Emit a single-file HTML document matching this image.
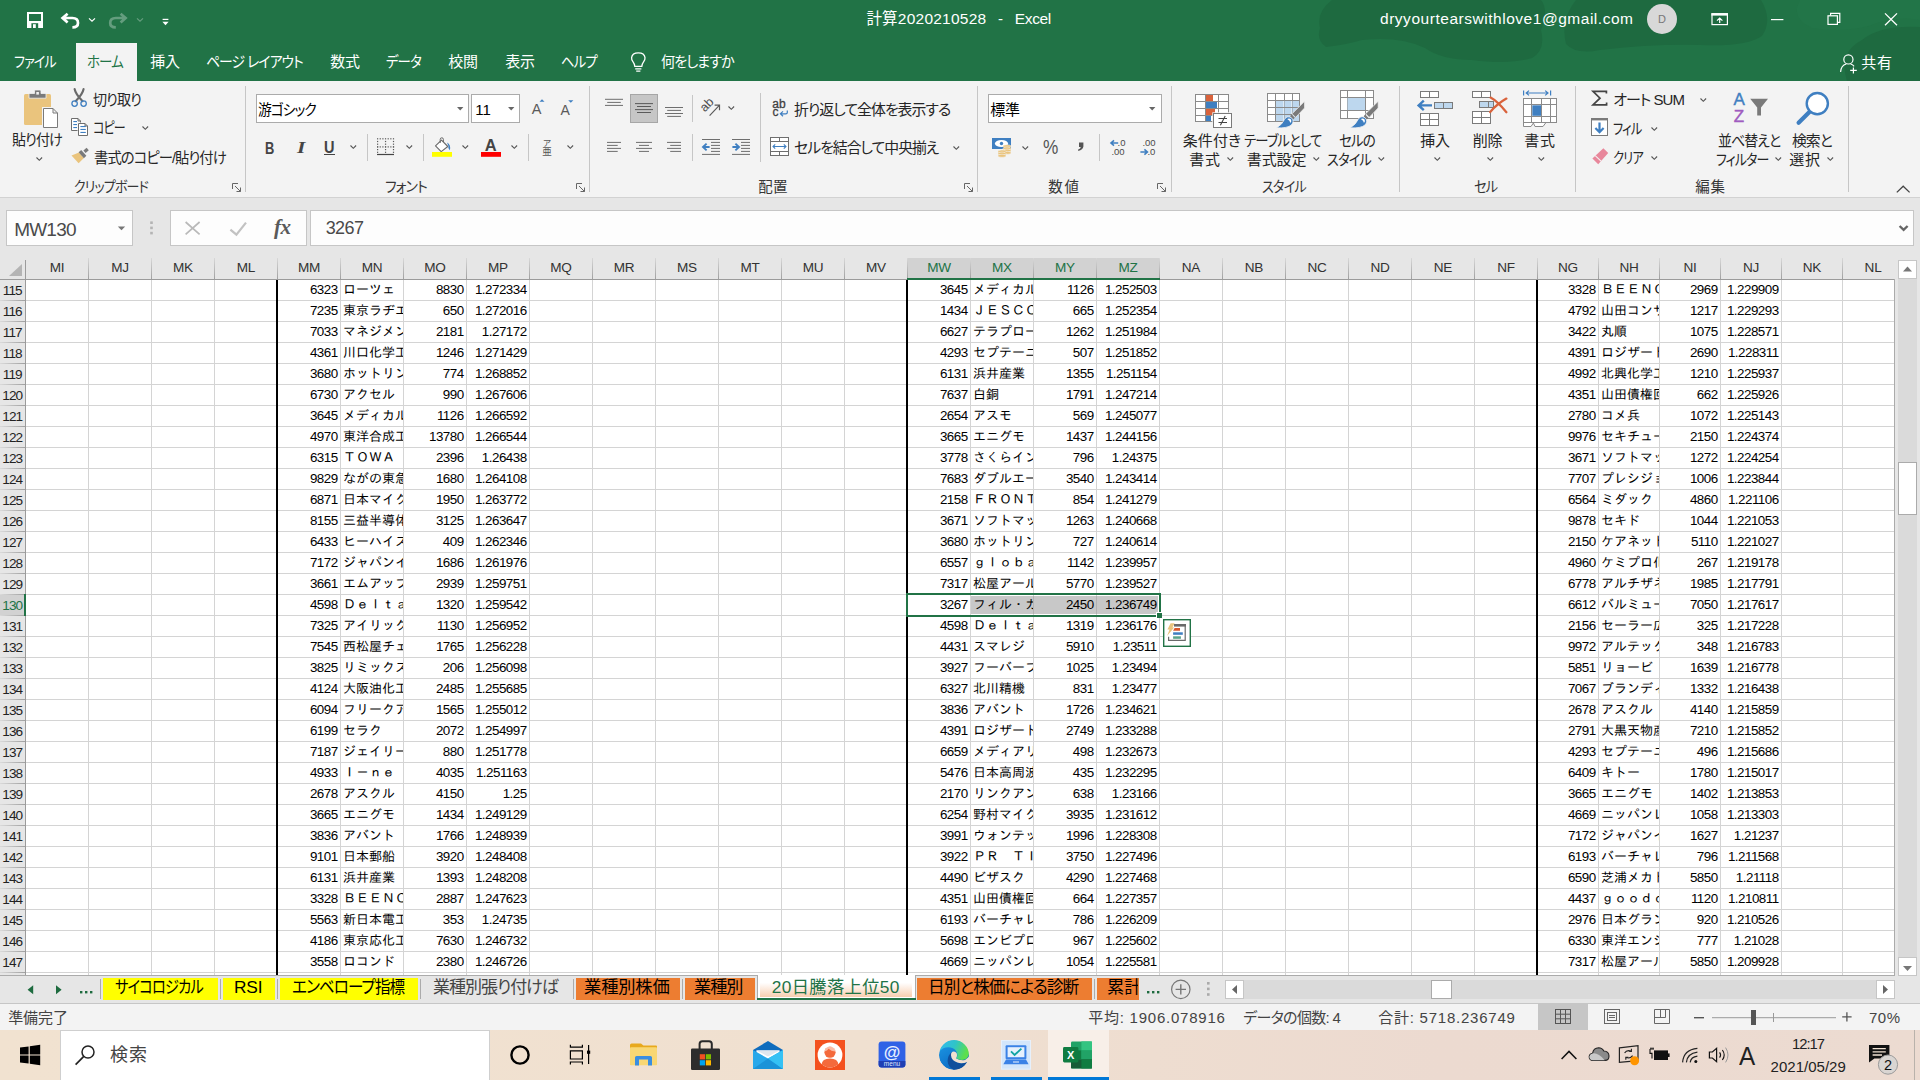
<!DOCTYPE html>
<html lang="ja"><head><meta charset="utf-8"><title>計算2020210528 - Excel</title>
<style>
*{box-sizing:border-box;margin:0;padding:0}
html,body{width:1920px;height:1080px;overflow:hidden;background:#fff}
body{position:relative;font-family:"Liberation Sans","Noto Sans CJK JP",sans-serif;font-size:15px;color:#262626;-webkit-font-smoothing:antialiased}
.abs,.abs>*{position:absolute}
.a{position:absolute}
.ui{font-family:"Liberation Sans","Noto Sans CJK JP",sans-serif;font-feature-settings:"palt" 1;white-space:nowrap}
svg{position:absolute;overflow:visible}
/* title */
#title{left:0;top:0;width:1920px;height:81px;background:#217346}
.tt{color:#fff;font-size:15.5px;line-height:20px;white-space:nowrap}
.mtab{color:#fff;font-size:15px;line-height:20px;top:52px;white-space:nowrap;letter-spacing:-0.6px}
/* ribbon */
#ribbon{left:0;top:81px;width:1920px;height:117px;background:#f3f3f3;border-bottom:1px solid #d2d2d2}
.rl{font-size:15px;line-height:20px;color:#262626;white-space:nowrap}
.gl{font-size:14.5px;line-height:20px;color:#444;white-space:nowrap;top:96px}
.vsep{width:1px;background:#c8c8c8}
/* formula */
#fbar{left:0;top:198px;width:1920px;height:60px;background:#e6e6e6}
.box{background:#fdfdfd;border:1px solid #c6c6c6}
/* grid */
#grid{left:0;top:258px;width:1920px;height:718px;background:#e6e6e6}
.ch{top:0;height:21px;line-height:20px;text-align:center;font-size:13.6px;color:#333;letter-spacing:-0.3px}
.rh{left:0;width:25px;height:21px;line-height:21px;text-align:center;font-size:13.6px;color:#222;letter-spacing:-0.85px;padding-right:0.5px}
.c{height:21px;line-height:21px;font-size:12.5px;color:#000;white-space:nowrap;overflow:hidden;font-family:"Liberation Sans","IPAGothic",sans-serif}
.n{text-align:right;padding-right:2.4px;font-size:13.4px;letter-spacing:-0.52px;line-height:20.4px}
.t{text-align:left;padding-left:2px;font-size:13px;line-height:20px}

.tx{position:absolute;white-space:nowrap;line-height:20px;height:20px;transform-origin:0 50%;font-feature-settings:"palt" 1}

#tabs{left:0;top:976px;width:1920px;height:28px;background:#e6e6e6;border-bottom:1px solid #c6c6c6}
.tb{position:absolute;top:978px;height:22px}
#status{left:0;top:1004px;width:1920px;height:26px;background:#f3f3f3}
#task{left:0;top:1030px;width:1920px;height:50px;background:linear-gradient(90deg,#f1e2d0 0%,#f0e0d0 45%,#ecdad0 75%,#ecdbd1 100%)}
</style></head>
<body>
<div id="title" class="a">
<svg style="left:0;top:0" width="1920" height="81" viewBox="0 0 1920 81"><g fill="#1e6a40"><path d="M1332 0 Q1316 12 1320 28 Q1316 40 1326 47 Q1345 45 1362 40 Q1400 36 1425 48 Q1442 60 1472 60 Q1510 65 1532 58 Q1546 50 1541 30 Q1549 10 1541 0 Z"/><path d="M1576 0 Q1560 20 1566 44 Q1576 55 1600 50 Q1650 44 1700 45 Q1746 47 1762 36 Q1773 20 1761 0 Z"/><path d="M1920 27 Q1880 25 1862 40 Q1838 52 1847 81 L1920 81 Z"/></g><path d="M1800 0 Q1790 18 1812 28 Q1850 34 1880 22 Q1905 16 1920 20 V0 Z" fill="#237749" opacity="0.6"/></svg>
<div class="a" style="left:76px;top:43px;width:61px;height:38px;background:#f3f3f3"></div>
<div class="tx" style="left:866.4px;top:9.0px;font-size:15.5px;color:#fff;letter-spacing:0.23px">計算2020210528</div>
<div class="tx" style="left:998.0px;top:9.0px;font-size:15.5px;color:#fff;letter-spacing:0.00px;transform:scaleX(0.967)">-</div>
<div class="tx" style="left:1014.8px;top:9.0px;font-size:15.5px;color:#fff;letter-spacing:-0.38px">Excel</div>
<div class="tx" style="left:1380.0px;top:9.0px;font-size:15.5px;color:#fff;letter-spacing:0.53px">dryyourtearswithlove1@gmail.com</div>
<div class="a" style="left:1647px;top:4px;width:30px;height:30px;border-radius:15px;background:#d8d8d8;color:#777;font-size:11px;line-height:30px;text-align:center">D</div>
<div class="tx" style="left:14.2px;top:52.0px;font-size:15px;color:#fff;letter-spacing:-1.00px;transform:scaleX(0.873)">ファイル</div>
<div class="tx" style="left:87.2px;top:52.0px;font-size:15px;color:#217346;letter-spacing:-1.00px;transform:scaleX(0.898)">ホーム</div>
<div class="tx" style="left:150.2px;top:52.0px;font-size:15px;color:#fff;letter-spacing:-0.27px">挿入</div>
<div class="tx" style="left:206.2px;top:52.0px;font-size:15px;color:#fff;letter-spacing:-1.00px;transform:scaleX(0.922)">ページ レイアウト</div>
<div class="tx" style="left:330.2px;top:52.0px;font-size:15px;color:#fff;letter-spacing:-0.27px">数式</div>
<div class="tx" style="left:386.2px;top:52.0px;font-size:15px;color:#fff;letter-spacing:-1.00px;transform:scaleX(0.895)">データ</div>
<div class="tx" style="left:448.2px;top:52.0px;font-size:15px;color:#fff;letter-spacing:-0.27px">校閲</div>
<div class="tx" style="left:505.2px;top:52.0px;font-size:15px;color:#fff;letter-spacing:-0.27px">表示</div>
<div class="tx" style="left:561.2px;top:52.0px;font-size:15px;color:#fff;letter-spacing:-1.00px;transform:scaleX(0.895)">ヘルプ</div>
<div class="tx" style="left:661.2px;top:52.0px;font-size:15px;color:#fff;letter-spacing:-1.00px;transform:scaleX(0.940)">何をしますか</div>
<div class="tx" style="left:1861.2px;top:53.0px;font-size:15px;color:#fff;letter-spacing:0.73px">共有</div>
<svg style="left:0;top:0" width="1920" height="81" viewBox="0 0 1920 81"><rect x="27.0" y="12.0" width="16.0" height="16.0" fill="#fff"/><rect x="29.0" y="14.0" width="12.0" height="7.0" fill="#217346"/><rect x="31.4" y="23.2" width="6.8" height="4.8" fill="#217346"/><rect x="33.0" y="24.2" width="2.8" height="3.8" fill="#fff"/><path d="M67.6 13.8 L62.6 18 L67.6 22.4 M63 18 H72.4 Q78 18 78 23 Q78 27.4 72.4 27.4" fill="none" stroke="#fff" stroke-width="2.7" stroke-linejoin="miter"/><path d="M89 18.4 L92 21.2 L95 18.4" fill="none" stroke="#fff" stroke-width="1.2"/><g opacity="0.3"><path d="M120.6 13.8 L125.6 18 L120.6 22.4 M125.2 18 H115.8 Q110.2 18 110.2 23 Q110.2 27.4 115.8 27.4" fill="none" stroke="#fff" stroke-width="2.7"/><path d="M137 18.4 L140 21.2 L143 18.4" fill="none" stroke="#fff" stroke-width="1.2"/></g><rect x="162.6" y="18.8" width="5.8" height="1.2" fill="#fff"/><polygon points="162.4,21.8 168.6,21.8 165.5,25.2" fill="#fff"/><path d="M634.8 66.4 Q634.6 63.8 632.9 61.6 Q631.4 59.6 631.6 57.6 Q632.2 52.8 638.3 52.8 Q644.4 52.8 645 57.6 Q645.2 59.6 643.7 61.6 Q642 63.8 641.8 66.4 Z M635.2 68.8 H641.4 M636.2 71.2 H640.4" fill="none" stroke="#fff" stroke-width="1.3"/><rect x="1712.0" y="13.8" width="15.4" height="10.8" fill="none" stroke="#fff" stroke-width="1.2"/><rect x="1711.4" y="13.2" width="16.6" height="2.4" fill="#fff"/><path d="M1719.7 23 V18.4 M1717 20.6 L1719.7 18 L1722.4 20.6" fill="none" stroke="#fff" stroke-width="1.2"/><rect x="1771.0" y="19.0" width="12.4" height="1.2" fill="#fff"/><path d="M1830.6 15.6 V13.4 H1839.8 V22.4 H1837.6" fill="none" stroke="#fff" stroke-width="1.2"/><rect x="1828.0" y="15.8" width="9.4" height="8.6" fill="none" stroke="#fff" stroke-width="1.2"/><path d="M1885 13.4 L1897 25.2 M1897 13.4 L1885 25.2" stroke="#fff" stroke-width="1.3"/><circle cx="1848.4" cy="59.4" r="4.6" fill="none" stroke="#fff" stroke-width="1.2"/><path d="M1840.6 72 Q1841 65.4 1846.2 64 M1850.6 64 Q1853 64.6 1854 66.4 M1853.4 67.4 V73.6 M1850.2 70.4 H1856.8" fill="none" stroke="#fff" stroke-width="1.2"/></svg>
</div>
<div id="ribbon" class="a"></div><div class="a" id="rb" style="left:0;top:0;width:1920px;height:198px">
<div class="tx" style="left:11.8px;top:130.0px;font-size:15px;color:#262626;letter-spacing:-1.00px;transform:scaleX(0.938)">貼り付け</div>
<svg style="left:36.2px;top:157.4px" width="6.6" height="3.8"><path d="M0.5 0.5 L3.3 3.3 L6.1 0.5" fill="none" stroke="#555" stroke-width="1.1"/></svg>
<div class="tx" style="left:93.2px;top:89.5px;font-size:15px;color:#262626;letter-spacing:-1.00px;transform:scaleX(0.938)">切り取り</div>
<div class="tx" style="left:93.2px;top:118.0px;font-size:15px;color:#262626;letter-spacing:-1.00px;transform:scaleX(0.799)">コピー</div>
<svg style="left:141.7px;top:126.1px" width="6.6" height="3.8"><path d="M0.5 0.5 L3.3 3.3 L6.1 0.5" fill="none" stroke="#555" stroke-width="1.1"/></svg>
<div class="tx" style="left:93.8px;top:147.5px;font-size:15px;color:#262626;letter-spacing:-1.00px;transform:scaleX(0.957)">書式のコピー/貼り付け</div>
<div class="tx" style="left:74.3px;top:176.8px;font-size:14.5px;color:#363636;letter-spacing:-1.00px;transform:scaleX(0.896)">クリップボード</div>
<svg style="left:231.7px;top:182.7px" width="10" height="10"><path d="M0.5 6 V0.5 H6" fill="none" stroke="#666" stroke-width="1"/><path d="M3 3 L8.5 8.5 M8.5 4.5 V8.5 H4.5" fill="none" stroke="#666" stroke-width="1"/></svg>
<div class="a" style="left:245px;top:86px;width:1px;height:106px;background:#c6c6c6"></div>
<div class="a box" style="left:256px;top:94px;width:213px;height:29px;background:#fff;border-color:#ababab"></div>
<div class="a box" style="left:471px;top:94px;width:49px;height:29px;background:#fff;border-color:#ababab"></div>
<div class="tx" style="left:258.2px;top:99.6px;font-size:15px;color:#000;letter-spacing:-1.00px;transform:scaleX(0.915)">游ゴシック</div>
<div class="tx" style="left:475.2px;top:99.7px;font-size:15px;color:#000;letter-spacing:0.02px">11</div>
<svg style="left:456.9px;top:107.1px" width="6.4" height="3.4"><polygon points="0,0 6.4,0 3.2,3.4" fill="#666"/></svg>
<svg style="left:507.7px;top:107.1px" width="6.4" height="3.4"><polygon points="0,0 6.4,0 3.2,3.4" fill="#666"/></svg>
<div class="tx" style="left:264.5px;top:138.2px;font-size:16.5px;color:#444;letter-spacing:0.00px;font-weight:700;transform:scaleX(0.780)">B</div>
<div class="tx" style="left:297.4px;top:138.2px;font-size:16.5px;color:#444;letter-spacing:0.00px;font-weight:700;transform:scaleX(1.306);font-style:italic;font-family:'Liberation Serif',serif">I</div>
<div class="tx" style="left:324.3px;top:137.4px;font-size:16.5px;color:#444;letter-spacing:0.00px;font-weight:700;transform:scaleX(0.881)">U</div>
<div class="a" style="left:324px;top:154px;width:11px;height:1px;background:#444"></div>
<svg style="left:349.7px;top:145.1px" width="6.6" height="3.8"><path d="M0.5 0.5 L3.3 3.3 L6.1 0.5" fill="none" stroke="#555" stroke-width="1.1"/></svg>
<div class="a" style="left:367px;top:134px;width:1px;height:27px;background:#c6c6c6"></div>
<svg style="left:405.7px;top:145.1px" width="6.6" height="3.8"><path d="M0.5 0.5 L3.3 3.3 L6.1 0.5" fill="none" stroke="#555" stroke-width="1.1"/></svg>
<div class="a" style="left:423px;top:134px;width:1px;height:27px;background:#c6c6c6"></div>
<svg style="left:461.7px;top:145.1px" width="6.6" height="3.8"><path d="M0.5 0.5 L3.3 3.3 L6.1 0.5" fill="none" stroke="#555" stroke-width="1.1"/></svg>
<svg style="left:510.7px;top:145.1px" width="6.6" height="3.8"><path d="M0.5 0.5 L3.3 3.3 L6.1 0.5" fill="none" stroke="#555" stroke-width="1.1"/></svg>
<div class="a" style="left:528px;top:134px;width:1px;height:27px;background:#c6c6c6"></div>
<svg style="left:566.7px;top:145.1px" width="6.6" height="3.8"><path d="M0.5 0.5 L3.3 3.3 L6.1 0.5" fill="none" stroke="#555" stroke-width="1.1"/></svg>
<div class="tx" style="left:385.3px;top:176.8px;font-size:14.5px;color:#363636;letter-spacing:-1.00px;transform:scaleX(0.960)">フォント</div>
<svg style="left:575.7px;top:182.7px" width="10" height="10"><path d="M0.5 6 V0.5 H6" fill="none" stroke="#666" stroke-width="1"/><path d="M3 3 L8.5 8.5 M8.5 4.5 V8.5 H4.5" fill="none" stroke="#666" stroke-width="1"/></svg>
<div class="a" style="left:589px;top:86px;width:1px;height:106px;background:#c6c6c6"></div>
<div class="a" style="left:630px;top:94px;width:28px;height:29px;background:#c6c6c6;border:1px solid #a6a6a6"></div>
<div class="a" style="left:692px;top:95px;width:1px;height:27px;background:#c6c6c6"></div>
<div class="a" style="left:692px;top:134px;width:1px;height:27px;background:#c6c6c6"></div>
<svg style="left:727.7px;top:106.1px" width="6.6" height="3.8"><path d="M0.5 0.5 L3.3 3.3 L6.1 0.5" fill="none" stroke="#555" stroke-width="1.1"/></svg>
<div class="a" style="left:760px;top:93px;width:1px;height:69px;background:#c6c6c6"></div>
<div class="tx" style="left:793.8px;top:99.5px;font-size:15px;color:#262626;letter-spacing:-1.00px;transform:scaleX(0.993)">折り返して全体を表示する</div>
<div class="tx" style="left:793.8px;top:138.0px;font-size:15px;color:#262626;letter-spacing:-1.00px;transform:scaleX(0.990)">セルを結合して中央揃え</div>
<svg style="left:952.7px;top:146.1px" width="6.6" height="3.8"><path d="M0.5 0.5 L3.3 3.3 L6.1 0.5" fill="none" stroke="#555" stroke-width="1.1"/></svg>
<div class="tx" style="left:758.3px;top:176.8px;font-size:14.5px;color:#363636;letter-spacing:0.23px">配置</div>
<svg style="left:963.7px;top:182.7px" width="10" height="10"><path d="M0.5 6 V0.5 H6" fill="none" stroke="#666" stroke-width="1"/><path d="M3 3 L8.5 8.5 M8.5 4.5 V8.5 H4.5" fill="none" stroke="#666" stroke-width="1"/></svg>
<div class="a" style="left:977px;top:86px;width:1px;height:106px;background:#c6c6c6"></div>
<div class="a box" style="left:988px;top:94px;width:174px;height:29px;background:#fff;border-color:#ababab"></div>
<div class="tx" style="left:990.2px;top:99.7px;font-size:15px;color:#000;letter-spacing:-0.27px">標準</div>
<svg style="left:1149.3px;top:107.1px" width="6.4" height="3.4"><polygon points="0,0 6.4,0 3.2,3.4" fill="#666"/></svg>
<svg style="left:1021.7px;top:146.1px" width="6.6" height="3.8"><path d="M0.5 0.5 L3.3 3.3 L6.1 0.5" fill="none" stroke="#555" stroke-width="1.1"/></svg>
<div class="tx" style="left:1043.0px;top:136.6px;font-size:20px;color:#555;letter-spacing:0.00px;transform:scaleX(0.860)">%</div>
<div class="a" style="left:1099px;top:134px;width:1px;height:27px;background:#c6c6c6"></div>
<div class="tx" style="left:1048.3px;top:176.8px;font-size:14.5px;color:#363636;letter-spacing:1.72px">数値</div>
<svg style="left:1157.2px;top:182.7px" width="10" height="10"><path d="M0.5 6 V0.5 H6" fill="none" stroke="#666" stroke-width="1"/><path d="M3 3 L8.5 8.5 M8.5 4.5 V8.5 H4.5" fill="none" stroke="#666" stroke-width="1"/></svg>
<div class="a" style="left:1171px;top:86px;width:1px;height:106px;background:#c6c6c6"></div>
<div class="tx" style="left:1182.8px;top:130.5px;font-size:15px;color:#262626;letter-spacing:0.04px">条件付き</div>
<div class="tx" style="left:1189.2px;top:150.0px;font-size:15px;color:#262626;letter-spacing:0.73px">書式</div>
<svg style="left:1226.7px;top:157.4px" width="6.6" height="3.8"><path d="M0.5 0.5 L3.3 3.3 L6.1 0.5" fill="none" stroke="#555" stroke-width="1.1"/></svg>
<div class="tx" style="left:1244.2px;top:130.5px;font-size:15px;color:#262626;letter-spacing:-1.00px;transform:scaleX(0.890)">テーブルとして</div>
<div class="tx" style="left:1246.8px;top:150.0px;font-size:15px;color:#262626;letter-spacing:-0.09px">書式設定</div>
<svg style="left:1313.2px;top:157.4px" width="6.6" height="3.8"><path d="M0.5 0.5 L3.3 3.3 L6.1 0.5" fill="none" stroke="#555" stroke-width="1.1"/></svg>
<div class="tx" style="left:1339.2px;top:130.5px;font-size:15px;color:#262626;letter-spacing:-1.00px;transform:scaleX(0.901)">セルの</div>
<div class="tx" style="left:1326.8px;top:150.0px;font-size:15px;color:#262626;letter-spacing:-1.00px;transform:scaleX(0.880)">スタイル</div>
<svg style="left:1378.2px;top:157.4px" width="6.6" height="3.8"><path d="M0.5 0.5 L3.3 3.3 L6.1 0.5" fill="none" stroke="#555" stroke-width="1.1"/></svg>
<div class="tx" style="left:1261.8px;top:176.8px;font-size:14.5px;color:#363636;letter-spacing:-1.00px;transform:scaleX(0.912)">スタイル</div>
<div class="a" style="left:1399px;top:86px;width:1px;height:106px;background:#c6c6c6"></div>
<div class="tx" style="left:1420.2px;top:130.5px;font-size:15px;color:#262626;letter-spacing:-0.27px">挿入</div>
<svg style="left:1434.2px;top:157.4px" width="6.6" height="3.8"><path d="M0.5 0.5 L3.3 3.3 L6.1 0.5" fill="none" stroke="#555" stroke-width="1.1"/></svg>
<div class="tx" style="left:1472.8px;top:130.5px;font-size:15px;color:#262626;letter-spacing:-0.27px">削除</div>
<svg style="left:1486.7px;top:157.4px" width="6.6" height="3.8"><path d="M0.5 0.5 L3.3 3.3 L6.1 0.5" fill="none" stroke="#555" stroke-width="1.1"/></svg>
<div class="tx" style="left:1524.2px;top:130.5px;font-size:15px;color:#262626;letter-spacing:0.73px">書式</div>
<svg style="left:1538.2px;top:157.4px" width="6.6" height="3.8"><path d="M0.5 0.5 L3.3 3.3 L6.1 0.5" fill="none" stroke="#555" stroke-width="1.1"/></svg>
<div class="tx" style="left:1474.3px;top:176.8px;font-size:14.5px;color:#363636;letter-spacing:-1.00px;transform:scaleX(0.918)">セル</div>
<div class="a" style="left:1575px;top:86px;width:1px;height:106px;background:#c6c6c6"></div>
<div class="tx" style="left:1613.2px;top:89.5px;font-size:15px;color:#262626;letter-spacing:-0.98px">オート SUM</div>
<svg style="left:1700.2px;top:97.6px" width="6.6" height="3.8"><path d="M0.5 0.5 L3.3 3.3 L6.1 0.5" fill="none" stroke="#555" stroke-width="1.1"/></svg>
<div class="tx" style="left:1613.2px;top:118.5px;font-size:15px;color:#262626;letter-spacing:-1.00px;transform:scaleX(0.816)">フィル</div>
<svg style="left:1650.7px;top:126.6px" width="6.6" height="3.8"><path d="M0.5 0.5 L3.3 3.3 L6.1 0.5" fill="none" stroke="#555" stroke-width="1.1"/></svg>
<div class="tx" style="left:1613.2px;top:147.5px;font-size:15px;color:#262626;letter-spacing:-1.00px;transform:scaleX(0.815)">クリア</div>
<svg style="left:1650.7px;top:155.6px" width="6.6" height="3.8"><path d="M0.5 0.5 L3.3 3.3 L6.1 0.5" fill="none" stroke="#555" stroke-width="1.1"/></svg>
<div class="tx" style="left:1718.2px;top:130.5px;font-size:15px;color:#262626;letter-spacing:-1.00px;transform:scaleX(0.929)">並べ替えと</div>
<div class="tx" style="left:1715.8px;top:150.0px;font-size:15px;color:#262626;letter-spacing:-1.00px;transform:scaleX(0.863)">フィルター</div>
<svg style="left:1775.2px;top:157.4px" width="6.6" height="3.8"><path d="M0.5 0.5 L3.3 3.3 L6.1 0.5" fill="none" stroke="#555" stroke-width="1.1"/></svg>
<div class="tx" style="left:1791.8px;top:130.5px;font-size:15px;color:#262626;letter-spacing:-1.00px;transform:scaleX(0.989)">検索と</div>
<div class="tx" style="left:1789.2px;top:150.0px;font-size:15px;color:#262626;letter-spacing:0.73px">選択</div>
<svg style="left:1826.7px;top:157.4px" width="6.6" height="3.8"><path d="M0.5 0.5 L3.3 3.3 L6.1 0.5" fill="none" stroke="#555" stroke-width="1.1"/></svg>
<div class="tx" style="left:1695.3px;top:176.8px;font-size:14.5px;color:#363636;letter-spacing:0.72px">編集</div>
<div class="a" style="left:1848px;top:86px;width:1px;height:106px;background:#c6c6c6"></div>
<svg style="left:1896px;top:185px" width="15" height="9"><path d="M0.8 7.4 L7.2 1.2 L13.6 7.4" fill="none" stroke="#444" stroke-width="1.3"/></svg>
<svg style="left:0;top:0" width="1920" height="198" viewBox="0 0 1920 198"><rect x="24" y="94" width="27" height="31" rx="1.5" fill="#eac47d"/><path d="M29 93.5 H34.5 V91 Q34.5 90 35.5 90 H40 Q41 90 41 91 V93.5 H46 V98.2 H29 Z" fill="#7a7a7a" stroke="#f3f3f3" stroke-width="0.8"/><rect x="36.3" y="92" width="2.6" height="2.6" fill="#f3f3f3"/><rect x="42" y="107" width="17" height="22" fill="#f3f3f3"/><path d="M43.5 108.5 H53.0 L57.5 113.0 V127.5 H43.5 Z M53.0 108.5 V113.0 H57.5" fill="#fff" stroke="#7a7a7a" stroke-width="1"/><path d="M74.6 89 Q75.5 94 82.6 101.2 M83.6 89 Q82.7 94 75.6 101.2" fill="none" stroke="#6a6a6a" stroke-width="2.1" stroke-linecap="round"/><circle cx="74.6" cy="103.6" r="2.7" fill="none" stroke="#3f7fc1" stroke-width="1.3"/><circle cx="83.6" cy="103.6" r="2.7" fill="none" stroke="#3f7fc1" stroke-width="1.3"/><path d="M71.5 118.5 H78.0 L80.5 121.0 V130.5 H71.5 Z M78.0 118.5 V121.0 H80.5" fill="#fff" stroke="#6e6e6e" stroke-width="1"/><rect x="73.3" y="121.0" width="3.7" height="1.1" fill="#3f7fc1"/><rect x="73.3" y="124.0" width="3.7" height="1.1" fill="#3f7fc1"/><rect x="73.3" y="127.0" width="3.7" height="1.1" fill="#3f7fc1"/><rect x="77.5" y="122.5" width="11.0" height="14.0" fill="#f3f3f3"/><path d="M78.5 123.5 H85.0 L87.5 126.0 V135.5 H78.5 Z M85.0 123.5 V126.0 H87.5" fill="#fff" stroke="#6e6e6e" stroke-width="1"/><rect x="80.4" y="126.0" width="5.4" height="1.1" fill="#3f7fc1"/><rect x="80.4" y="128.9" width="5.4" height="1.1" fill="#3f7fc1"/><rect x="80.4" y="131.9" width="5.4" height="1.1" fill="#3f7fc1"/><polygon points="71.5,155.6 79,152.6 83.9,158 78.6,163.2" fill="#eac47d"/><polygon points="78.6,152.2 81.2,150 86.4,155.8 83.9,158.2" fill="#7a7a7a"/><polygon points="83.4,150.6 86.6,147.8 88.8,150.2 85.6,153" fill="#7a7a7a"/><text x="536.6" y="113.7" font-size="14.5" text-anchor="middle" fill="#5a5a5a" font-family="Liberation Sans, sans-serif">A</text><polygon points="539.5,101.8 544.5,101.8 542,99.2" fill="#3f7fc1"/><text x="565.2" y="114.5" font-size="14" text-anchor="middle" fill="#5a5a5a" font-family="Liberation Sans, sans-serif">A</text><polygon points="568.2,100.2 573.4,100.2 570.8,102.8" fill="#3f7fc1"/><g fill="#5a5a5a"><rect x="377.00" y="138.20" width="1.2" height="1.2"/><rect x="377.00" y="146.30" width="1.2" height="1.2"/><rect x="379.65" y="138.20" width="1.2" height="1.2"/><rect x="379.65" y="146.30" width="1.2" height="1.2"/><rect x="382.30" y="138.20" width="1.2" height="1.2"/><rect x="382.30" y="146.30" width="1.2" height="1.2"/><rect x="384.95" y="138.20" width="1.2" height="1.2"/><rect x="384.95" y="146.30" width="1.2" height="1.2"/><rect x="387.60" y="138.20" width="1.2" height="1.2"/><rect x="387.60" y="146.30" width="1.2" height="1.2"/><rect x="390.25" y="138.20" width="1.2" height="1.2"/><rect x="390.25" y="146.30" width="1.2" height="1.2"/><rect x="392.90" y="138.20" width="1.2" height="1.2"/><rect x="392.90" y="146.30" width="1.2" height="1.2"/><rect x="377.00" y="140.90" width="1.2" height="1.2"/><rect x="384.95" y="140.90" width="1.2" height="1.2"/><rect x="392.90" y="140.90" width="1.2" height="1.2"/><rect x="377.00" y="143.60" width="1.2" height="1.2"/><rect x="384.95" y="143.60" width="1.2" height="1.2"/><rect x="392.90" y="143.60" width="1.2" height="1.2"/><rect x="377.00" y="146.30" width="1.2" height="1.2"/><rect x="384.95" y="146.30" width="1.2" height="1.2"/><rect x="392.90" y="146.30" width="1.2" height="1.2"/><rect x="377.00" y="149.00" width="1.2" height="1.2"/><rect x="384.95" y="149.00" width="1.2" height="1.2"/><rect x="392.90" y="149.00" width="1.2" height="1.2"/><rect x="377.00" y="151.70" width="1.2" height="1.2"/><rect x="384.95" y="151.70" width="1.2" height="1.2"/><rect x="392.90" y="151.70" width="1.2" height="1.2"/></g><rect x="377.0" y="153.9" width="17.0" height="1.2" fill="#444"/><path d="M441.5 140.2 L447.8 146.5 L441.2 151.6 L435.5 145.8 Z" fill="#fff" stroke="#6a6a6a" stroke-width="1.1" stroke-linejoin="round"/><path d="M440.2 143 V139.4 Q440.2 137.8 441.8 137.8 Q443.4 137.8 443.4 139.4 V142" fill="none" stroke="#6a6a6a" stroke-width="1"/><path d="M447 142.5 Q451.2 144.5 449.8 150.2 Q447.6 147.6 448.6 146.4 Z" fill="#3f7fc1"/><rect x="432.0" y="152.0" width="20.0" height="4.8" fill="#ffff00"/><text x="490.8" y="150.5" font-size="16.5" font-weight="700" text-anchor="middle" fill="#444" font-family="Liberation Sans, sans-serif">A</text><rect x="481.0" y="152.0" width="20.0" height="4.8" fill="#ff0000"/><text x="547" y="145.6" font-size="8.5" text-anchor="middle" fill="#555" font-family="Liberation Sans, Noto Sans CJK JP, sans-serif">ア</text><text x="547" y="155.4" font-size="9.5" text-anchor="middle" fill="#555" font-family="Liberation Sans, Noto Sans CJK JP, sans-serif">亜</text><rect x="605.0" y="98.8" width="18.0" height="1.0" fill="#6e6e6e"/><rect x="607.2" y="101.9" width="13.6" height="1.0" fill="#6e6e6e"/><rect x="605.0" y="104.9" width="18.0" height="1.0" fill="#6e6e6e"/><rect x="635.0" y="103.1" width="18.0" height="1.0" fill="#5a5a5a"/><rect x="637.0" y="106.0" width="14.0" height="1.0" fill="#5a5a5a"/><rect x="635.0" y="109.1" width="18.0" height="1.0" fill="#5a5a5a"/><rect x="637.0" y="112.0" width="14.0" height="1.0" fill="#5a5a5a"/><rect x="665.0" y="107.0" width="18.0" height="1.0" fill="#6e6e6e"/><rect x="667.2" y="109.9" width="13.8" height="1.0" fill="#6e6e6e"/><rect x="665.0" y="113.0" width="18.0" height="1.0" fill="#6e6e6e"/><rect x="667.2" y="115.9" width="13.8" height="1.0" fill="#6e6e6e"/><text transform="translate(709.6,107.6) rotate(-45)" font-size="12.5" text-anchor="middle" fill="#505050" font-family="Liberation Sans, sans-serif">ab</text><path d="M709.6 115.6 L719.3 105.4 M714.6 105.2 H719.5 V110.2" fill="none" stroke="#5a5a5a" stroke-width="1.2"/><text x="772.2" y="108" font-size="12" fill="#404040" stroke="#404040" stroke-width="0.3" font-family="Liberation Sans, sans-serif" letter-spacing="0.2">ab</text><text x="772.4" y="116.4" font-size="12" fill="#404040" stroke="#404040" stroke-width="0.3" font-family="Liberation Sans, sans-serif">c</text><path d="M787.3 110.4 V112.4 Q787.3 113.8 785.8 113.8 H780.6 M783 111.4 L780.4 113.8 L783 116.2" fill="none" stroke="#3f7fc1" stroke-width="1.2"/><rect x="607.0" y="141.9" width="14.0" height="1.0" fill="#6e6e6e"/><rect x="636.0" y="141.9" width="16.0" height="1.0" fill="#6e6e6e"/><rect x="667.0" y="141.9" width="14.0" height="1.0" fill="#6e6e6e"/><rect x="607.0" y="144.9" width="10.7" height="1.0" fill="#6e6e6e"/><rect x="639.0" y="144.9" width="10.0" height="1.0" fill="#6e6e6e"/><rect x="670.2" y="144.9" width="10.8" height="1.0" fill="#6e6e6e"/><rect x="607.0" y="147.9" width="14.0" height="1.0" fill="#6e6e6e"/><rect x="636.0" y="147.9" width="16.0" height="1.0" fill="#6e6e6e"/><rect x="667.0" y="147.9" width="14.0" height="1.0" fill="#6e6e6e"/><rect x="607.0" y="150.9" width="10.7" height="1.0" fill="#6e6e6e"/><rect x="639.0" y="150.9" width="10.0" height="1.0" fill="#6e6e6e"/><rect x="670.2" y="150.9" width="10.8" height="1.0" fill="#6e6e6e"/><rect x="702.0" y="139.0" width="18.0" height="1.0" fill="#6e6e6e"/><rect x="702.0" y="153.9" width="18.0" height="1.0" fill="#6e6e6e"/><rect x="711.0" y="141.9" width="9.0" height="1.0" fill="#6e6e6e"/><rect x="711.0" y="144.9" width="9.0" height="1.0" fill="#6e6e6e"/><rect x="711.0" y="147.9" width="9.0" height="1.0" fill="#6e6e6e"/><rect x="711.0" y="150.9" width="9.0" height="1.0" fill="#6e6e6e"/><rect x="732.0" y="139.0" width="18.0" height="1.0" fill="#6e6e6e"/><rect x="732.0" y="153.9" width="18.0" height="1.0" fill="#6e6e6e"/><rect x="741.0" y="141.9" width="9.0" height="1.0" fill="#6e6e6e"/><rect x="741.0" y="144.9" width="9.0" height="1.0" fill="#6e6e6e"/><rect x="741.0" y="147.9" width="9.0" height="1.0" fill="#6e6e6e"/><rect x="741.0" y="150.9" width="9.0" height="1.0" fill="#6e6e6e"/><path d="M709.6 147 H703.4 M706.6 143.6 L703 147 L706.6 150.4" fill="none" stroke="#3f7fc1" stroke-width="1.9"/><path d="M732.4 147 H738.6 M735.4 143.6 L739 147 L735.4 150.4" fill="none" stroke="#3f7fc1" stroke-width="1.9"/><rect x="770.5" y="137.5" width="18.0" height="18.0" fill="#fff" stroke="#6e6e6e" stroke-width="1"/><rect x="770.0" y="141.0" width="19.0" height="1.0" fill="#6e6e6e"/><rect x="770.0" y="151.0" width="19.0" height="1.0" fill="#6e6e6e"/><rect x="779.0" y="137.0" width="1.0" height="4.5" fill="#6e6e6e"/><rect x="779.0" y="151.5" width="1.0" height="4.5" fill="#6e6e6e"/><path d="M773 146.5 H786 M775.2 144.3 L773 146.5 L775.2 148.7 M783.8 144.3 L786 146.5 L783.8 148.7" fill="none" stroke="#3f7fc1" stroke-width="1.1"/><rect x="992.0" y="138.0" width="19.0" height="11.0" fill="#3f7fc1"/><ellipse cx="1001.5" cy="143.5" rx="6.6" ry="3.6" fill="#fff"/><circle cx="1001.5" cy="143.5" r="1.7" fill="#3f7fc1"/><ellipse cx="1007" cy="146.2" rx="4" ry="1.5" fill="#eac47d" stroke="#f3f3f3" stroke-width="0.5"/><ellipse cx="1007" cy="148.4" rx="4" ry="1.5" fill="#eac47d" stroke="#f3f3f3" stroke-width="0.5"/><ellipse cx="1007" cy="150.6" rx="4" ry="1.5" fill="#eac47d" stroke="#f3f3f3" stroke-width="0.5"/><ellipse cx="1007" cy="152.8" rx="4" ry="1.5" fill="#eac47d" stroke="#f3f3f3" stroke-width="0.5"/><ellipse cx="1002" cy="151.4" rx="4" ry="1.5" fill="#eac47d" stroke="#f3f3f3" stroke-width="0.5"/><ellipse cx="1002" cy="153.6" rx="4" ry="1.5" fill="#eac47d" stroke="#f3f3f3" stroke-width="0.5"/><ellipse cx="1002" cy="155.8" rx="4" ry="1.5" fill="#eac47d" stroke="#f3f3f3" stroke-width="0.5"/><path d="M1079 142.6 H1083.4 V146.6 Q1083 150 1078.2 151 V149.4 Q1080.6 148.8 1080.8 147 H1079 Z" fill="#555"/><text x="1117.6" y="146.2" font-size="9.5" fill="#4a4a4a" font-family="Liberation Sans, sans-serif">.0</text><text x="1111.4" y="155" font-size="9.5" fill="#4a4a4a" font-family="Liberation Sans, sans-serif">.00</text><path d="M1118.2 143 H1111.4 M1114 140.4 L1111 143 L1114 145.6" fill="none" stroke="#3f7fc1" stroke-width="1.6"/><text x="1142.4" y="146.2" font-size="9.5" fill="#4a4a4a" font-family="Liberation Sans, sans-serif">.00</text><text x="1147.4" y="155" font-size="9.5" fill="#4a4a4a" font-family="Liberation Sans, sans-serif">.0</text><path d="M1140.4 152 H1147 M1144.4 149.4 L1147.4 152 L1144.4 154.6" fill="none" stroke="#3f7fc1" stroke-width="1.6"/><rect x="1195.5" y="94.5" width="33.0" height="27.0" fill="#fff" stroke="#8a8a8a" stroke-width="1"/><rect x="1205.0" y="94.0" width="1.0" height="28.0" fill="#8a8a8a"/><rect x="1218.0" y="94.0" width="1.0" height="28.0" fill="#8a8a8a"/><rect x="1195.0" y="101.0" width="34.0" height="1.0" fill="#8a8a8a"/><rect x="1195.0" y="108.0" width="34.0" height="1.0" fill="#8a8a8a"/><rect x="1195.0" y="115.0" width="34.0" height="1.0" fill="#8a8a8a"/><rect x="1206.0" y="95.0" width="7.0" height="6.0" fill="#d9623b"/><rect x="1206.0" y="102.0" width="11.0" height="6.0" fill="#3f7fc1"/><rect x="1206.0" y="109.0" width="9.0" height="6.0" fill="#d9623b"/><rect x="1206.0" y="116.0" width="5.0" height="5.0" fill="#3f7fc1"/><rect x="1212.3" y="112.3" width="20.2" height="15.7" fill="#f3f3f3"/><rect x="1213.5" y="113.5" width="18.0" height="14.0" fill="#fff" stroke="#7a7a7a" stroke-width="1"/><path d="M1218.5 118.5 H1227 M1218.5 122.5 H1227 M1220.4 125.2 L1225.2 116" fill="none" stroke="#444" stroke-width="1.1"/><rect x="1267.5" y="93.5" width="32.0" height="28.0" fill="#fff" stroke="#8a8a8a" stroke-width="1"/><rect x="1275.0" y="93.0" width="1.0" height="29.0" fill="#8a8a8a"/><rect x="1284.0" y="93.0" width="1.0" height="29.0" fill="#8a8a8a"/><rect x="1292.0" y="93.0" width="1.0" height="29.0" fill="#8a8a8a"/><rect x="1267.0" y="100.0" width="33.0" height="1.0" fill="#8a8a8a"/><rect x="1267.0" y="107.0" width="33.0" height="1.0" fill="#8a8a8a"/><rect x="1267.0" y="114.0" width="33.0" height="1.0" fill="#8a8a8a"/><rect x="1276.0" y="101.0" width="7.5" height="6.0" fill="#bdd7ee"/><rect x="1276.0" y="108.0" width="7.5" height="6.0" fill="#bdd7ee"/><rect x="1276.0" y="115.0" width="7.5" height="6.0" fill="#bdd7ee"/><rect x="1284.5" y="101.0" width="7.0" height="6.0" fill="#bdd7ee"/><rect x="1284.5" y="108.0" width="7.0" height="6.0" fill="#bdd7ee"/><rect x="1284.5" y="115.0" width="7.0" height="6.0" fill="#bdd7ee"/><rect x="1292.5" y="101.0" width="6.5" height="6.0" fill="#bdd7ee"/><rect x="1292.5" y="108.0" width="6.5" height="6.0" fill="#bdd7ee"/><rect x="1292.5" y="115.0" width="6.5" height="6.0" fill="#bdd7ee"/><g transform="translate(0,0)"><path d="M1304.6 101.2 L1304.6 108 L1295.6 117.4 L1292 113.8 Z" fill="#7a7a7a" stroke="#f3f3f3" stroke-width="0.8"/><path d="M1291.6 114.6 L1294.8 117.8 L1293.2 119.4 L1290 116.2 Z" fill="#7a7a7a"/><path d="M1276.6 127.8 Q1282.4 124.4 1284.4 119.6 Q1286.8 115.2 1291.2 117.6 Q1295 121 1291.4 125 Q1287.4 128.4 1276.6 127.8 Z" fill="#3f7fc1" stroke="#f3f3f3" stroke-width="0.8"/><path d="M1287.2 119 Q1289.4 117.6 1291 119.6 Q1292 121.2 1290.4 123 Q1290 120.4 1287.2 119 Z" fill="#fff"/></g><rect x="1340.5" y="90.5" width="33.0" height="28.0" fill="#fff" stroke="#8a8a8a" stroke-width="1"/><rect x="1347.0" y="90.0" width="1.0" height="29.0" fill="#8a8a8a"/><rect x="1365.0" y="90.0" width="1.0" height="29.0" fill="#8a8a8a"/><rect x="1340.0" y="97.0" width="34.0" height="1.0" fill="#8a8a8a"/><rect x="1340.0" y="110.0" width="34.0" height="1.0" fill="#8a8a8a"/><rect x="1347.5" y="98.0" width="17.5" height="12.0" fill="#bdd7ee"/><g transform="translate(73.6,0)"><path d="M1304.6 101.2 L1304.6 108 L1295.6 117.4 L1292 113.8 Z" fill="#7a7a7a" stroke="#f3f3f3" stroke-width="0.8"/><path d="M1291.6 114.6 L1294.8 117.8 L1293.2 119.4 L1290 116.2 Z" fill="#7a7a7a"/><path d="M1276.6 127.8 Q1282.4 124.4 1284.4 119.6 Q1286.8 115.2 1291.2 117.6 Q1295 121 1291.4 125 Q1287.4 128.4 1276.6 127.8 Z" fill="#3f7fc1" stroke="#f3f3f3" stroke-width="0.8"/><path d="M1287.2 119 Q1289.4 117.6 1291 119.6 Q1292 121.2 1290.4 123 Q1290 120.4 1287.2 119 Z" fill="#fff"/></g><rect x="1420.5" y="91.5" width="18.0" height="6.0" fill="#fff" stroke="#7a7a7a" stroke-width="1"/><rect x="1429.0" y="91.5" width="1.0" height="6.0" fill="#7a7a7a"/><rect x="1434.5" y="102.5" width="18.0" height="6.0" fill="#bdd7ee" stroke="#7a7a7a" stroke-width="1"/><rect x="1443.0" y="102.5" width="1.0" height="6.0" fill="#7a7a7a"/><rect x="1420.5" y="113.5" width="18.0" height="12.0" fill="#fff" stroke="#7a7a7a" stroke-width="1"/><rect x="1429.0" y="113.5" width="1.0" height="12.0" fill="#7a7a7a"/><rect x="1420.5" y="119.0" width="18.0" height="1.0" fill="#7a7a7a"/><path d="M1432 105.4 H1419.4 M1423.8 100.6 L1418.6 105.4 L1423.8 110.2" fill="none" stroke="#3f7fc1" stroke-width="2.4"/><rect x="1472.5" y="91.5" width="18.0" height="6.0" fill="#fff" stroke="#7a7a7a" stroke-width="1"/><rect x="1481.0" y="91.5" width="1.0" height="6.0" fill="#7a7a7a"/><rect x="1479.5" y="101.5" width="14.0" height="6.0" fill="#bdd7ee" stroke="#7a7a7a" stroke-width="1"/><rect x="1488.0" y="101.5" width="1.0" height="6.0" fill="#7a7a7a"/><rect x="1472.5" y="111.5" width="18.0" height="12.0" fill="#fff" stroke="#7a7a7a" stroke-width="1"/><rect x="1481.0" y="111.5" width="1.0" height="12.0" fill="#7a7a7a"/><rect x="1472.5" y="117.0" width="18.0" height="1.0" fill="#7a7a7a"/><path d="M1490.6 97.6 Q1497 101 1506.4 112.2 M1506.4 98.6 Q1497 104 1490.2 112" fill="none" stroke="#d9623b" stroke-width="2.3" stroke-linecap="round"/><path d="M1523.6 90.4 V95.6 M1550.6 90.4 V95.6 M1526.4 93 H1547.8 M1529 90.6 L1526.2 93 L1529 95.4 M1545.2 90.6 L1548 93 L1545.2 95.4" fill="none" stroke="#3f7fc1" stroke-width="1.2"/><path d="M1523.5 122 V126.5 H1531 L1533.4 123 L1535 126.5 H1543 L1546 122.5" fill="#fff" stroke="#8a8a8a" stroke-width="1"/><rect x="1523.5" y="98.5" width="33.0" height="24.0" fill="#fff" stroke="#8a8a8a" stroke-width="1"/><rect x="1531.0" y="98.0" width="1.0" height="25.0" fill="#8a8a8a"/><rect x="1541.0" y="98.0" width="1.0" height="25.0" fill="#8a8a8a"/><rect x="1550.0" y="98.0" width="1.0" height="25.0" fill="#8a8a8a"/><rect x="1523.0" y="104.0" width="34.0" height="1.0" fill="#8a8a8a"/><rect x="1523.0" y="116.0" width="34.0" height="1.0" fill="#8a8a8a"/><rect x="1532.3" y="105.3" width="8.7" height="10.5" fill="#3f7fc1"/><path d="M1606.4 93.4 V91.3 H1593 L1600 98.2 L1593 104.8 H1606.6 V102.6" fill="none" stroke="#444" stroke-width="1.7" stroke-linejoin="miter"/><rect x="1591.5" y="118.5" width="16.0" height="17.0" fill="#fff" stroke="#7a7a7a" stroke-width="1"/><rect x="1591.0" y="118.0" width="17.0" height="2.4" fill="#7a7a7a"/><path d="M1599.5 122.4 V132.4 M1595.4 128 L1599.5 132.2 L1603.6 128" fill="none" stroke="#3f7fc1" stroke-width="2.2"/><path d="M1603.4 148.2 L1608.2 153 L1598.2 164.2 L1592.4 158.6 Z" fill="#e8879b"/><path d="M1595.2 155.6 L1601 161.2" stroke="#f3f3f3" stroke-width="1.1"/><text x="1733.4" y="105" font-size="17" fill="#3f7fc1" stroke="#3f7fc1" stroke-width="0.4" font-family="Liberation Sans, sans-serif">A</text><text x="1733.8" y="122.4" font-size="17" fill="#a05cc0" stroke="#a05cc0" stroke-width="0.4" font-family="Liberation Sans, sans-serif">Z</text><path d="M1750.2 98.8 H1768 L1761 107.4 V115.4 H1757.2 V107.4 Z" fill="#7a7a7a"/><path d="M1809.4 112 L1798.6 122.8" stroke="#3f7fc1" stroke-width="4.2" stroke-linecap="round"/><circle cx="1817.3" cy="103.6" r="10.6" fill="#fff" stroke="#3f7fc1" stroke-width="2.4"/></svg>
</div>
<div id="fbar" class="a">
<div class="a box" style="left:6px;top:12px;width:127px;height:36px"></div>
<div class="a box" style="left:170px;top:12px;width:137px;height:36px"></div>
<div class="a box" style="left:310px;top:12px;width:1604px;height:36px"></div>
</div>
<div class="tx" style="left:14.2px;top:220.4px;font-size:19px;color:#4a4a4a;letter-spacing:-0.79px;font-family:'Liberation Sans',sans-serif">MW130</div>
<div class="tx" style="left:325.7px;top:217.8px;font-size:18px;color:#4a4a4a;letter-spacing:-0.58px;font-family:'Liberation Sans',sans-serif">3267</div>
<svg style="left:0;top:198px" width="1920" height="60" viewBox="0 198 1920 60"><polygon points="117.8,226.4 125.2,226.4 121.5,230.2" fill="#777"/><rect x="150.2" y="221.4" width="2.6" height="2.6" fill="#b4b4b4"/><rect x="150.2" y="226.6" width="2.6" height="2.6" fill="#b4b4b4"/><rect x="150.2" y="231.8" width="2.6" height="2.6" fill="#b4b4b4"/><path d="M185.6 222 L199.6 234.4 M199.6 222 L185.6 234.4" stroke="#b9b9b9" stroke-width="1.7" fill="none"/><path d="M230.4 229.6 L236.4 234.6 L246 222.6" stroke="#c2c2c2" stroke-width="2.2" fill="none"/><text x="274" y="234" font-size="21" font-style="italic" font-weight="700" fill="#5a5a5a" font-family="Liberation Serif, serif" letter-spacing="-0.5">fx</text><path d="M1899.6 226 L1903.6 229.8 L1907.6 226" stroke="#666" stroke-width="2.4" fill="none"/></svg>
<div id="grid" class="a">
<div class="a" style="left:26px;top:22px;width:1868px;height:695px;background:#fff"></div>
<div class="a" style="left:907px;top:0;width:253px;height:20px;background:#d2d2d2"></div>
<div class="a" style="left:0;top:337px;width:25px;height:21px;background:#d2d2d2"></div>
<div class="a" style="left:971px;top:338px;width:187px;height:18px;background:#c8c8c8"></div>
<svg class="a" style="left:0;top:0" width="1920" height="718" shape-rendering="crispEdges"><defs><linearGradient id="hg" x1="0" y1="0" x2="0" y2="1"><stop offset="0" stop-color="#d8d8d8"/><stop offset="1" stop-color="#a0a0a0"/></linearGradient><linearGradient id="vg" x1="0" y1="0" x2="1" y2="0"><stop offset="0" stop-color="#dadada"/><stop offset="1" stop-color="#a0a0a0"/></linearGradient></defs><rect x="88" y="22" width="1" height="695" fill="#d4d4d4"/><rect x="151" y="22" width="1" height="695" fill="#d4d4d4"/><rect x="214" y="22" width="1" height="695" fill="#d4d4d4"/><rect x="277" y="22" width="1" height="695" fill="#d4d4d4"/><rect x="340" y="22" width="1" height="695" fill="#d4d4d4"/><rect x="403" y="22" width="1" height="695" fill="#d4d4d4"/><rect x="466" y="22" width="1" height="695" fill="#d4d4d4"/><rect x="529" y="22" width="1" height="695" fill="#d4d4d4"/><rect x="592" y="22" width="1" height="695" fill="#d4d4d4"/><rect x="655" y="22" width="1" height="695" fill="#d4d4d4"/><rect x="718" y="22" width="1" height="695" fill="#d4d4d4"/><rect x="781" y="22" width="1" height="695" fill="#d4d4d4"/><rect x="844" y="22" width="1" height="695" fill="#d4d4d4"/><rect x="907" y="22" width="1" height="695" fill="#d4d4d4"/><rect x="970" y="22" width="1" height="695" fill="#d4d4d4"/><rect x="1033" y="22" width="1" height="695" fill="#d4d4d4"/><rect x="1096" y="22" width="1" height="695" fill="#d4d4d4"/><rect x="1159" y="22" width="1" height="695" fill="#d4d4d4"/><rect x="1222" y="22" width="1" height="695" fill="#d4d4d4"/><rect x="1285" y="22" width="1" height="695" fill="#d4d4d4"/><rect x="1348" y="22" width="1" height="695" fill="#d4d4d4"/><rect x="1411" y="22" width="1" height="695" fill="#d4d4d4"/><rect x="1474" y="22" width="1" height="695" fill="#d4d4d4"/><rect x="1537" y="22" width="1" height="695" fill="#d4d4d4"/><rect x="1598" y="22" width="1" height="695" fill="#d4d4d4"/><rect x="1659" y="22" width="1" height="695" fill="#d4d4d4"/><rect x="1720" y="22" width="1" height="695" fill="#d4d4d4"/><rect x="1781" y="22" width="1" height="695" fill="#d4d4d4"/><rect x="1842" y="22" width="1" height="695" fill="#d4d4d4"/><rect x="26" y="42" width="1868" height="1" fill="#d4d4d4"/><rect x="26" y="63" width="1868" height="1" fill="#d4d4d4"/><rect x="26" y="84" width="1868" height="1" fill="#d4d4d4"/><rect x="26" y="105" width="1868" height="1" fill="#d4d4d4"/><rect x="26" y="126" width="1868" height="1" fill="#d4d4d4"/><rect x="26" y="147" width="1868" height="1" fill="#d4d4d4"/><rect x="26" y="168" width="1868" height="1" fill="#d4d4d4"/><rect x="26" y="189" width="1868" height="1" fill="#d4d4d4"/><rect x="26" y="210" width="1868" height="1" fill="#d4d4d4"/><rect x="26" y="231" width="1868" height="1" fill="#d4d4d4"/><rect x="26" y="252" width="1868" height="1" fill="#d4d4d4"/><rect x="26" y="273" width="1868" height="1" fill="#d4d4d4"/><rect x="26" y="294" width="1868" height="1" fill="#d4d4d4"/><rect x="26" y="315" width="1868" height="1" fill="#d4d4d4"/><rect x="26" y="336" width="1868" height="1" fill="#d4d4d4"/><rect x="26" y="357" width="1868" height="1" fill="#d4d4d4"/><rect x="26" y="378" width="1868" height="1" fill="#d4d4d4"/><rect x="26" y="399" width="1868" height="1" fill="#d4d4d4"/><rect x="26" y="420" width="1868" height="1" fill="#d4d4d4"/><rect x="26" y="441" width="1868" height="1" fill="#d4d4d4"/><rect x="26" y="462" width="1868" height="1" fill="#d4d4d4"/><rect x="26" y="483" width="1868" height="1" fill="#d4d4d4"/><rect x="26" y="504" width="1868" height="1" fill="#d4d4d4"/><rect x="26" y="525" width="1868" height="1" fill="#d4d4d4"/><rect x="26" y="546" width="1868" height="1" fill="#d4d4d4"/><rect x="26" y="567" width="1868" height="1" fill="#d4d4d4"/><rect x="26" y="588" width="1868" height="1" fill="#d4d4d4"/><rect x="26" y="609" width="1868" height="1" fill="#d4d4d4"/><rect x="26" y="630" width="1868" height="1" fill="#d4d4d4"/><rect x="26" y="651" width="1868" height="1" fill="#d4d4d4"/><rect x="26" y="672" width="1868" height="1" fill="#d4d4d4"/><rect x="26" y="693" width="1868" height="1" fill="#d4d4d4"/><rect x="26" y="714" width="1868" height="1" fill="#d4d4d4"/><rect x="88" y="0" width="1" height="21" fill="url(#hg)"/><rect x="151" y="0" width="1" height="21" fill="url(#hg)"/><rect x="214" y="0" width="1" height="21" fill="url(#hg)"/><rect x="277" y="0" width="1" height="21" fill="url(#hg)"/><rect x="340" y="0" width="1" height="21" fill="url(#hg)"/><rect x="403" y="0" width="1" height="21" fill="url(#hg)"/><rect x="466" y="0" width="1" height="21" fill="url(#hg)"/><rect x="529" y="0" width="1" height="21" fill="url(#hg)"/><rect x="592" y="0" width="1" height="21" fill="url(#hg)"/><rect x="655" y="0" width="1" height="21" fill="url(#hg)"/><rect x="718" y="0" width="1" height="21" fill="url(#hg)"/><rect x="781" y="0" width="1" height="21" fill="url(#hg)"/><rect x="844" y="0" width="1" height="21" fill="url(#hg)"/><rect x="907" y="0" width="1" height="21" fill="url(#hg)"/><rect x="970" y="0" width="1" height="21" fill="url(#hg)"/><rect x="1033" y="0" width="1" height="21" fill="url(#hg)"/><rect x="1096" y="0" width="1" height="21" fill="url(#hg)"/><rect x="1159" y="0" width="1" height="21" fill="url(#hg)"/><rect x="1222" y="0" width="1" height="21" fill="url(#hg)"/><rect x="1285" y="0" width="1" height="21" fill="url(#hg)"/><rect x="1348" y="0" width="1" height="21" fill="url(#hg)"/><rect x="1411" y="0" width="1" height="21" fill="url(#hg)"/><rect x="1474" y="0" width="1" height="21" fill="url(#hg)"/><rect x="1537" y="0" width="1" height="21" fill="url(#hg)"/><rect x="1598" y="0" width="1" height="21" fill="url(#hg)"/><rect x="1659" y="0" width="1" height="21" fill="url(#hg)"/><rect x="1720" y="0" width="1" height="21" fill="url(#hg)"/><rect x="1781" y="0" width="1" height="21" fill="url(#hg)"/><rect x="1842" y="0" width="1" height="21" fill="url(#hg)"/><rect x="0" y="42" width="25" height="1" fill="url(#vg)"/><rect x="0" y="63" width="25" height="1" fill="url(#vg)"/><rect x="0" y="84" width="25" height="1" fill="url(#vg)"/><rect x="0" y="105" width="25" height="1" fill="url(#vg)"/><rect x="0" y="126" width="25" height="1" fill="url(#vg)"/><rect x="0" y="147" width="25" height="1" fill="url(#vg)"/><rect x="0" y="168" width="25" height="1" fill="url(#vg)"/><rect x="0" y="189" width="25" height="1" fill="url(#vg)"/><rect x="0" y="210" width="25" height="1" fill="url(#vg)"/><rect x="0" y="231" width="25" height="1" fill="url(#vg)"/><rect x="0" y="252" width="25" height="1" fill="url(#vg)"/><rect x="0" y="273" width="25" height="1" fill="url(#vg)"/><rect x="0" y="294" width="25" height="1" fill="url(#vg)"/><rect x="0" y="315" width="25" height="1" fill="url(#vg)"/><rect x="0" y="336" width="25" height="1" fill="url(#vg)"/><rect x="0" y="357" width="25" height="1" fill="url(#vg)"/><rect x="0" y="378" width="25" height="1" fill="url(#vg)"/><rect x="0" y="399" width="25" height="1" fill="url(#vg)"/><rect x="0" y="420" width="25" height="1" fill="url(#vg)"/><rect x="0" y="441" width="25" height="1" fill="url(#vg)"/><rect x="0" y="462" width="25" height="1" fill="url(#vg)"/><rect x="0" y="483" width="25" height="1" fill="url(#vg)"/><rect x="0" y="504" width="25" height="1" fill="url(#vg)"/><rect x="0" y="525" width="25" height="1" fill="url(#vg)"/><rect x="0" y="546" width="25" height="1" fill="url(#vg)"/><rect x="0" y="567" width="25" height="1" fill="url(#vg)"/><rect x="0" y="588" width="25" height="1" fill="url(#vg)"/><rect x="0" y="609" width="25" height="1" fill="url(#vg)"/><rect x="0" y="630" width="25" height="1" fill="url(#vg)"/><rect x="0" y="651" width="25" height="1" fill="url(#vg)"/><rect x="0" y="672" width="25" height="1" fill="url(#vg)"/><rect x="0" y="693" width="25" height="1" fill="url(#vg)"/><rect x="0" y="714" width="25" height="1" fill="url(#vg)"/><rect x="25" y="2" width="1" height="716" fill="#9b9b9b"/><rect x="0" y="21" width="1895" height="1" fill="#9b9b9b"/><rect x="1894" y="21" width="1" height="697" fill="#ababab"/><rect x="0" y="717" width="1895" height="1" fill="#ababab"/><polygon points="22,6 22,18 9,18" fill="#b4b4b4" shape-rendering="auto"/><rect x="276" y="22" width="2" height="695" fill="#000"/><rect x="906" y="22" width="2" height="695" fill="#000"/><rect x="1536" y="22" width="2" height="695" fill="#000"/><rect x="907" y="20" width="253" height="2" fill="#217346"/><rect x="24" y="336" width="2" height="22" fill="#217346"/><rect x="1033" y="338" width="1" height="18" fill="#b2b2b2"/><rect x="1096" y="338" width="1" height="18" fill="#b2b2b2"/><rect x="906" y="335" width="255" height="2" fill="#217346"/><rect x="906" y="335" width="2" height="24" fill="#217346"/><rect x="906" y="357" width="250" height="2" fill="#217346"/><rect x="1159" y="335" width="2" height="19" fill="#217346"/><rect x="1156" y="354" width="6" height="6" fill="#fff"/><rect x="1157" y="355" width="5" height="5" fill="#217346"/></svg>
<div class="a ch" style="left:26px;width:62px">MI</div>
<div class="a ch" style="left:89px;width:62px">MJ</div>
<div class="a ch" style="left:152px;width:62px">MK</div>
<div class="a ch" style="left:215px;width:62px">ML</div>
<div class="a ch" style="left:278px;width:62px">MM</div>
<div class="a ch" style="left:341px;width:62px">MN</div>
<div class="a ch" style="left:404px;width:62px">MO</div>
<div class="a ch" style="left:467px;width:62px">MP</div>
<div class="a ch" style="left:530px;width:62px">MQ</div>
<div class="a ch" style="left:593px;width:62px">MR</div>
<div class="a ch" style="left:656px;width:62px">MS</div>
<div class="a ch" style="left:719px;width:62px">MT</div>
<div class="a ch" style="left:782px;width:62px">MU</div>
<div class="a ch" style="left:845px;width:62px">MV</div>
<div class="a ch" style="left:908px;width:62px;color:#217346">MW</div>
<div class="a ch" style="left:971px;width:62px;color:#217346">MX</div>
<div class="a ch" style="left:1034px;width:62px;color:#217346">MY</div>
<div class="a ch" style="left:1097px;width:62px;color:#217346">MZ</div>
<div class="a ch" style="left:1160px;width:62px">NA</div>
<div class="a ch" style="left:1223px;width:62px">NB</div>
<div class="a ch" style="left:1286px;width:62px">NC</div>
<div class="a ch" style="left:1349px;width:62px">ND</div>
<div class="a ch" style="left:1412px;width:62px">NE</div>
<div class="a ch" style="left:1475px;width:62px">NF</div>
<div class="a ch" style="left:1538px;width:60px">NG</div>
<div class="a ch" style="left:1599px;width:60px">NH</div>
<div class="a ch" style="left:1660px;width:60px">NI</div>
<div class="a ch" style="left:1721px;width:60px">NJ</div>
<div class="a ch" style="left:1782px;width:60px">NK</div>
<div class="a ch" style="left:1843px;width:60px">NL</div>
<div class="a rh" style="top:22px">115</div>
<div class="a rh" style="top:43px">116</div>
<div class="a rh" style="top:64px">117</div>
<div class="a rh" style="top:85px">118</div>
<div class="a rh" style="top:106px">119</div>
<div class="a rh" style="top:127px">120</div>
<div class="a rh" style="top:148px">121</div>
<div class="a rh" style="top:169px">122</div>
<div class="a rh" style="top:190px">123</div>
<div class="a rh" style="top:211px">124</div>
<div class="a rh" style="top:232px">125</div>
<div class="a rh" style="top:253px">126</div>
<div class="a rh" style="top:274px">127</div>
<div class="a rh" style="top:295px">128</div>
<div class="a rh" style="top:316px">129</div>
<div class="a rh" style="top:337px;color:#217346">130</div>
<div class="a rh" style="top:358px">131</div>
<div class="a rh" style="top:379px">132</div>
<div class="a rh" style="top:400px">133</div>
<div class="a rh" style="top:421px">134</div>
<div class="a rh" style="top:442px">135</div>
<div class="a rh" style="top:463px">136</div>
<div class="a rh" style="top:484px">137</div>
<div class="a rh" style="top:505px">138</div>
<div class="a rh" style="top:526px">139</div>
<div class="a rh" style="top:547px">140</div>
<div class="a rh" style="top:568px">141</div>
<div class="a rh" style="top:589px">142</div>
<div class="a rh" style="top:610px">143</div>
<div class="a rh" style="top:631px">144</div>
<div class="a rh" style="top:652px">145</div>
<div class="a rh" style="top:673px">146</div>
<div class="a rh" style="top:694px">147</div>
<div class="a c n" style="left:278px;top:22px;width:62px">6323</div>
<div class="a c t" style="left:341px;top:22px;width:62px">ローツェ</div>
<div class="a c n" style="left:404px;top:22px;width:62px">8830</div>
<div class="a c n" style="left:467px;top:22px;width:62px">1.272334</div>
<div class="a c n" style="left:278px;top:43px;width:62px">7235</div>
<div class="a c t" style="left:341px;top:43px;width:62px">東京ラヂエ</div>
<div class="a c n" style="left:404px;top:43px;width:62px">650</div>
<div class="a c n" style="left:467px;top:43px;width:62px">1.272016</div>
<div class="a c n" style="left:278px;top:64px;width:62px">7033</div>
<div class="a c t" style="left:341px;top:64px;width:62px">マネジメン</div>
<div class="a c n" style="left:404px;top:64px;width:62px">2181</div>
<div class="a c n" style="left:467px;top:64px;width:62px">1.27172</div>
<div class="a c n" style="left:278px;top:85px;width:62px">4361</div>
<div class="a c t" style="left:341px;top:85px;width:62px">川口化学工</div>
<div class="a c n" style="left:404px;top:85px;width:62px">1246</div>
<div class="a c n" style="left:467px;top:85px;width:62px">1.271429</div>
<div class="a c n" style="left:278px;top:106px;width:62px">3680</div>
<div class="a c t" style="left:341px;top:106px;width:62px">ホットリン</div>
<div class="a c n" style="left:404px;top:106px;width:62px">774</div>
<div class="a c n" style="left:467px;top:106px;width:62px">1.268852</div>
<div class="a c n" style="left:278px;top:127px;width:62px">6730</div>
<div class="a c t" style="left:341px;top:127px;width:62px">アクセル</div>
<div class="a c n" style="left:404px;top:127px;width:62px">990</div>
<div class="a c n" style="left:467px;top:127px;width:62px">1.267606</div>
<div class="a c n" style="left:278px;top:148px;width:62px">3645</div>
<div class="a c t" style="left:341px;top:148px;width:62px">メディカル</div>
<div class="a c n" style="left:404px;top:148px;width:62px">1126</div>
<div class="a c n" style="left:467px;top:148px;width:62px">1.266592</div>
<div class="a c n" style="left:278px;top:169px;width:62px">4970</div>
<div class="a c t" style="left:341px;top:169px;width:62px">東洋合成工</div>
<div class="a c n" style="left:404px;top:169px;width:62px">13780</div>
<div class="a c n" style="left:467px;top:169px;width:62px">1.266544</div>
<div class="a c n" style="left:278px;top:190px;width:62px">6315</div>
<div class="a c t" style="left:341px;top:190px;width:62px">ＴＯＷＡ</div>
<div class="a c n" style="left:404px;top:190px;width:62px">2396</div>
<div class="a c n" style="left:467px;top:190px;width:62px">1.26438</div>
<div class="a c n" style="left:278px;top:211px;width:62px">9829</div>
<div class="a c t" style="left:341px;top:211px;width:62px">ながの東急</div>
<div class="a c n" style="left:404px;top:211px;width:62px">1680</div>
<div class="a c n" style="left:467px;top:211px;width:62px">1.264108</div>
<div class="a c n" style="left:278px;top:232px;width:62px">6871</div>
<div class="a c t" style="left:341px;top:232px;width:62px">日本マイク</div>
<div class="a c n" style="left:404px;top:232px;width:62px">1950</div>
<div class="a c n" style="left:467px;top:232px;width:62px">1.263772</div>
<div class="a c n" style="left:278px;top:253px;width:62px">8155</div>
<div class="a c t" style="left:341px;top:253px;width:62px">三益半導体</div>
<div class="a c n" style="left:404px;top:253px;width:62px">3125</div>
<div class="a c n" style="left:467px;top:253px;width:62px">1.263647</div>
<div class="a c n" style="left:278px;top:274px;width:62px">6433</div>
<div class="a c t" style="left:341px;top:274px;width:62px">ヒーハイス</div>
<div class="a c n" style="left:404px;top:274px;width:62px">409</div>
<div class="a c n" style="left:467px;top:274px;width:62px">1.262346</div>
<div class="a c n" style="left:278px;top:295px;width:62px">7172</div>
<div class="a c t" style="left:341px;top:295px;width:62px">ジャパンイ</div>
<div class="a c n" style="left:404px;top:295px;width:62px">1686</div>
<div class="a c n" style="left:467px;top:295px;width:62px">1.261976</div>
<div class="a c n" style="left:278px;top:316px;width:62px">3661</div>
<div class="a c t" style="left:341px;top:316px;width:62px">エムアップ</div>
<div class="a c n" style="left:404px;top:316px;width:62px">2939</div>
<div class="a c n" style="left:467px;top:316px;width:62px">1.259751</div>
<div class="a c n" style="left:278px;top:337px;width:62px">4598</div>
<div class="a c t" style="left:341px;top:337px;width:62px">Ｄｅｌｔａ</div>
<div class="a c n" style="left:404px;top:337px;width:62px">1320</div>
<div class="a c n" style="left:467px;top:337px;width:62px">1.259542</div>
<div class="a c n" style="left:278px;top:358px;width:62px">7325</div>
<div class="a c t" style="left:341px;top:358px;width:62px">アイリック</div>
<div class="a c n" style="left:404px;top:358px;width:62px">1130</div>
<div class="a c n" style="left:467px;top:358px;width:62px">1.256952</div>
<div class="a c n" style="left:278px;top:379px;width:62px">7545</div>
<div class="a c t" style="left:341px;top:379px;width:62px">西松屋チェ</div>
<div class="a c n" style="left:404px;top:379px;width:62px">1765</div>
<div class="a c n" style="left:467px;top:379px;width:62px">1.256228</div>
<div class="a c n" style="left:278px;top:400px;width:62px">3825</div>
<div class="a c t" style="left:341px;top:400px;width:62px">リミックス</div>
<div class="a c n" style="left:404px;top:400px;width:62px">206</div>
<div class="a c n" style="left:467px;top:400px;width:62px">1.256098</div>
<div class="a c n" style="left:278px;top:421px;width:62px">4124</div>
<div class="a c t" style="left:341px;top:421px;width:62px">大阪油化工</div>
<div class="a c n" style="left:404px;top:421px;width:62px">2485</div>
<div class="a c n" style="left:467px;top:421px;width:62px">1.255685</div>
<div class="a c n" style="left:278px;top:442px;width:62px">6094</div>
<div class="a c t" style="left:341px;top:442px;width:62px">フリークア</div>
<div class="a c n" style="left:404px;top:442px;width:62px">1565</div>
<div class="a c n" style="left:467px;top:442px;width:62px">1.255012</div>
<div class="a c n" style="left:278px;top:463px;width:62px">6199</div>
<div class="a c t" style="left:341px;top:463px;width:62px">セラク</div>
<div class="a c n" style="left:404px;top:463px;width:62px">2072</div>
<div class="a c n" style="left:467px;top:463px;width:62px">1.254997</div>
<div class="a c n" style="left:278px;top:484px;width:62px">7187</div>
<div class="a c t" style="left:341px;top:484px;width:62px">ジェイリー</div>
<div class="a c n" style="left:404px;top:484px;width:62px">880</div>
<div class="a c n" style="left:467px;top:484px;width:62px">1.251778</div>
<div class="a c n" style="left:278px;top:505px;width:62px">4933</div>
<div class="a c t" style="left:341px;top:505px;width:62px">Ｉ－ｎｅ</div>
<div class="a c n" style="left:404px;top:505px;width:62px">4035</div>
<div class="a c n" style="left:467px;top:505px;width:62px">1.251163</div>
<div class="a c n" style="left:278px;top:526px;width:62px">2678</div>
<div class="a c t" style="left:341px;top:526px;width:62px">アスクル</div>
<div class="a c n" style="left:404px;top:526px;width:62px">4150</div>
<div class="a c n" style="left:467px;top:526px;width:62px">1.25</div>
<div class="a c n" style="left:278px;top:547px;width:62px">3665</div>
<div class="a c t" style="left:341px;top:547px;width:62px">エニグモ</div>
<div class="a c n" style="left:404px;top:547px;width:62px">1434</div>
<div class="a c n" style="left:467px;top:547px;width:62px">1.249129</div>
<div class="a c n" style="left:278px;top:568px;width:62px">3836</div>
<div class="a c t" style="left:341px;top:568px;width:62px">アバント</div>
<div class="a c n" style="left:404px;top:568px;width:62px">1766</div>
<div class="a c n" style="left:467px;top:568px;width:62px">1.248939</div>
<div class="a c n" style="left:278px;top:589px;width:62px">9101</div>
<div class="a c t" style="left:341px;top:589px;width:62px">日本郵船</div>
<div class="a c n" style="left:404px;top:589px;width:62px">3920</div>
<div class="a c n" style="left:467px;top:589px;width:62px">1.248408</div>
<div class="a c n" style="left:278px;top:610px;width:62px">6131</div>
<div class="a c t" style="left:341px;top:610px;width:62px">浜井産業</div>
<div class="a c n" style="left:404px;top:610px;width:62px">1393</div>
<div class="a c n" style="left:467px;top:610px;width:62px">1.248208</div>
<div class="a c n" style="left:278px;top:631px;width:62px">3328</div>
<div class="a c t" style="left:341px;top:631px;width:62px">ＢＥＥＮＯ</div>
<div class="a c n" style="left:404px;top:631px;width:62px">2887</div>
<div class="a c n" style="left:467px;top:631px;width:62px">1.247623</div>
<div class="a c n" style="left:278px;top:652px;width:62px">5563</div>
<div class="a c t" style="left:341px;top:652px;width:62px">新日本電工</div>
<div class="a c n" style="left:404px;top:652px;width:62px">353</div>
<div class="a c n" style="left:467px;top:652px;width:62px">1.24735</div>
<div class="a c n" style="left:278px;top:673px;width:62px">4186</div>
<div class="a c t" style="left:341px;top:673px;width:62px">東京応化工</div>
<div class="a c n" style="left:404px;top:673px;width:62px">7630</div>
<div class="a c n" style="left:467px;top:673px;width:62px">1.246732</div>
<div class="a c n" style="left:278px;top:694px;width:62px">3558</div>
<div class="a c t" style="left:341px;top:694px;width:62px">ロコンド</div>
<div class="a c n" style="left:404px;top:694px;width:62px">2380</div>
<div class="a c n" style="left:467px;top:694px;width:62px">1.246726</div>
<div class="a c n" style="left:908px;top:22px;width:62px">3645</div>
<div class="a c t" style="left:971px;top:22px;width:62px">メディカル</div>
<div class="a c n" style="left:1034px;top:22px;width:62px">1126</div>
<div class="a c n" style="left:1097px;top:22px;width:62px">1.252503</div>
<div class="a c n" style="left:908px;top:43px;width:62px">1434</div>
<div class="a c t" style="left:971px;top:43px;width:62px">ＪＥＳＣＯ</div>
<div class="a c n" style="left:1034px;top:43px;width:62px">665</div>
<div class="a c n" style="left:1097px;top:43px;width:62px">1.252354</div>
<div class="a c n" style="left:908px;top:64px;width:62px">6627</div>
<div class="a c t" style="left:971px;top:64px;width:62px">テラプロー</div>
<div class="a c n" style="left:1034px;top:64px;width:62px">1262</div>
<div class="a c n" style="left:1097px;top:64px;width:62px">1.251984</div>
<div class="a c n" style="left:908px;top:85px;width:62px">4293</div>
<div class="a c t" style="left:971px;top:85px;width:62px">セプテーニ</div>
<div class="a c n" style="left:1034px;top:85px;width:62px">507</div>
<div class="a c n" style="left:1097px;top:85px;width:62px">1.251852</div>
<div class="a c n" style="left:908px;top:106px;width:62px">6131</div>
<div class="a c t" style="left:971px;top:106px;width:62px">浜井産業</div>
<div class="a c n" style="left:1034px;top:106px;width:62px">1355</div>
<div class="a c n" style="left:1097px;top:106px;width:62px">1.251154</div>
<div class="a c n" style="left:908px;top:127px;width:62px">7637</div>
<div class="a c t" style="left:971px;top:127px;width:62px">白銅</div>
<div class="a c n" style="left:1034px;top:127px;width:62px">1791</div>
<div class="a c n" style="left:1097px;top:127px;width:62px">1.247214</div>
<div class="a c n" style="left:908px;top:148px;width:62px">2654</div>
<div class="a c t" style="left:971px;top:148px;width:62px">アスモ</div>
<div class="a c n" style="left:1034px;top:148px;width:62px">569</div>
<div class="a c n" style="left:1097px;top:148px;width:62px">1.245077</div>
<div class="a c n" style="left:908px;top:169px;width:62px">3665</div>
<div class="a c t" style="left:971px;top:169px;width:62px">エニグモ</div>
<div class="a c n" style="left:1034px;top:169px;width:62px">1437</div>
<div class="a c n" style="left:1097px;top:169px;width:62px">1.244156</div>
<div class="a c n" style="left:908px;top:190px;width:62px">3778</div>
<div class="a c t" style="left:971px;top:190px;width:62px">さくらイン</div>
<div class="a c n" style="left:1034px;top:190px;width:62px">796</div>
<div class="a c n" style="left:1097px;top:190px;width:62px">1.24375</div>
<div class="a c n" style="left:908px;top:211px;width:62px">7683</div>
<div class="a c t" style="left:971px;top:211px;width:62px">ダブルエー</div>
<div class="a c n" style="left:1034px;top:211px;width:62px">3540</div>
<div class="a c n" style="left:1097px;top:211px;width:62px">1.243414</div>
<div class="a c n" style="left:908px;top:232px;width:62px">2158</div>
<div class="a c t" style="left:971px;top:232px;width:62px">ＦＲＯＮＴ</div>
<div class="a c n" style="left:1034px;top:232px;width:62px">854</div>
<div class="a c n" style="left:1097px;top:232px;width:62px">1.241279</div>
<div class="a c n" style="left:908px;top:253px;width:62px">3671</div>
<div class="a c t" style="left:971px;top:253px;width:62px">ソフトマッ</div>
<div class="a c n" style="left:1034px;top:253px;width:62px">1263</div>
<div class="a c n" style="left:1097px;top:253px;width:62px">1.240668</div>
<div class="a c n" style="left:908px;top:274px;width:62px">3680</div>
<div class="a c t" style="left:971px;top:274px;width:62px">ホットリン</div>
<div class="a c n" style="left:1034px;top:274px;width:62px">727</div>
<div class="a c n" style="left:1097px;top:274px;width:62px">1.240614</div>
<div class="a c n" style="left:908px;top:295px;width:62px">6557</div>
<div class="a c t" style="left:971px;top:295px;width:62px">ｇｌｏｂａ</div>
<div class="a c n" style="left:1034px;top:295px;width:62px">1142</div>
<div class="a c n" style="left:1097px;top:295px;width:62px">1.239957</div>
<div class="a c n" style="left:908px;top:316px;width:62px">7317</div>
<div class="a c t" style="left:971px;top:316px;width:62px">松屋アール</div>
<div class="a c n" style="left:1034px;top:316px;width:62px">5770</div>
<div class="a c n" style="left:1097px;top:316px;width:62px">1.239527</div>
<div class="a c n" style="left:908px;top:337px;width:62px">3267</div>
<div class="a c t" style="left:971px;top:337px;width:62px">フィル・カ</div>
<div class="a c n" style="left:1034px;top:337px;width:62px">2450</div>
<div class="a c n" style="left:1097px;top:337px;width:62px">1.236749</div>
<div class="a c n" style="left:908px;top:358px;width:62px">4598</div>
<div class="a c t" style="left:971px;top:358px;width:62px">Ｄｅｌｔａ</div>
<div class="a c n" style="left:1034px;top:358px;width:62px">1319</div>
<div class="a c n" style="left:1097px;top:358px;width:62px">1.236176</div>
<div class="a c n" style="left:908px;top:379px;width:62px">4431</div>
<div class="a c t" style="left:971px;top:379px;width:62px">スマレジ</div>
<div class="a c n" style="left:1034px;top:379px;width:62px">5910</div>
<div class="a c n" style="left:1097px;top:379px;width:62px">1.23511</div>
<div class="a c n" style="left:908px;top:400px;width:62px">3927</div>
<div class="a c t" style="left:971px;top:400px;width:62px">フーバーブ</div>
<div class="a c n" style="left:1034px;top:400px;width:62px">1025</div>
<div class="a c n" style="left:1097px;top:400px;width:62px">1.23494</div>
<div class="a c n" style="left:908px;top:421px;width:62px">6327</div>
<div class="a c t" style="left:971px;top:421px;width:62px">北川精機</div>
<div class="a c n" style="left:1034px;top:421px;width:62px">831</div>
<div class="a c n" style="left:1097px;top:421px;width:62px">1.23477</div>
<div class="a c n" style="left:908px;top:442px;width:62px">3836</div>
<div class="a c t" style="left:971px;top:442px;width:62px">アバント</div>
<div class="a c n" style="left:1034px;top:442px;width:62px">1726</div>
<div class="a c n" style="left:1097px;top:442px;width:62px">1.234621</div>
<div class="a c n" style="left:908px;top:463px;width:62px">4391</div>
<div class="a c t" style="left:971px;top:463px;width:62px">ロジザード</div>
<div class="a c n" style="left:1034px;top:463px;width:62px">2749</div>
<div class="a c n" style="left:1097px;top:463px;width:62px">1.233288</div>
<div class="a c n" style="left:908px;top:484px;width:62px">6659</div>
<div class="a c t" style="left:971px;top:484px;width:62px">メディアリ</div>
<div class="a c n" style="left:1034px;top:484px;width:62px">498</div>
<div class="a c n" style="left:1097px;top:484px;width:62px">1.232673</div>
<div class="a c n" style="left:908px;top:505px;width:62px">5476</div>
<div class="a c t" style="left:971px;top:505px;width:62px">日本高周波</div>
<div class="a c n" style="left:1034px;top:505px;width:62px">435</div>
<div class="a c n" style="left:1097px;top:505px;width:62px">1.232295</div>
<div class="a c n" style="left:908px;top:526px;width:62px">2170</div>
<div class="a c t" style="left:971px;top:526px;width:62px">リンクアン</div>
<div class="a c n" style="left:1034px;top:526px;width:62px">638</div>
<div class="a c n" style="left:1097px;top:526px;width:62px">1.23166</div>
<div class="a c n" style="left:908px;top:547px;width:62px">6254</div>
<div class="a c t" style="left:971px;top:547px;width:62px">野村マイク</div>
<div class="a c n" style="left:1034px;top:547px;width:62px">3935</div>
<div class="a c n" style="left:1097px;top:547px;width:62px">1.231612</div>
<div class="a c n" style="left:908px;top:568px;width:62px">3991</div>
<div class="a c t" style="left:971px;top:568px;width:62px">ウォンテッ</div>
<div class="a c n" style="left:1034px;top:568px;width:62px">1996</div>
<div class="a c n" style="left:1097px;top:568px;width:62px">1.228308</div>
<div class="a c n" style="left:908px;top:589px;width:62px">3922</div>
<div class="a c t" style="left:971px;top:589px;width:62px">ＰＲ　ＴＩ</div>
<div class="a c n" style="left:1034px;top:589px;width:62px">3750</div>
<div class="a c n" style="left:1097px;top:589px;width:62px">1.227496</div>
<div class="a c n" style="left:908px;top:610px;width:62px">4490</div>
<div class="a c t" style="left:971px;top:610px;width:62px">ビザスク</div>
<div class="a c n" style="left:1034px;top:610px;width:62px">4290</div>
<div class="a c n" style="left:1097px;top:610px;width:62px">1.227468</div>
<div class="a c n" style="left:908px;top:631px;width:62px">4351</div>
<div class="a c t" style="left:971px;top:631px;width:62px">山田債権回</div>
<div class="a c n" style="left:1034px;top:631px;width:62px">664</div>
<div class="a c n" style="left:1097px;top:631px;width:62px">1.227357</div>
<div class="a c n" style="left:908px;top:652px;width:62px">6193</div>
<div class="a c t" style="left:971px;top:652px;width:62px">バーチャレ</div>
<div class="a c n" style="left:1034px;top:652px;width:62px">786</div>
<div class="a c n" style="left:1097px;top:652px;width:62px">1.226209</div>
<div class="a c n" style="left:908px;top:673px;width:62px">5698</div>
<div class="a c t" style="left:971px;top:673px;width:62px">エンビプロ</div>
<div class="a c n" style="left:1034px;top:673px;width:62px">967</div>
<div class="a c n" style="left:1097px;top:673px;width:62px">1.225602</div>
<div class="a c n" style="left:908px;top:694px;width:62px">4669</div>
<div class="a c t" style="left:971px;top:694px;width:62px">ニッパンレ</div>
<div class="a c n" style="left:1034px;top:694px;width:62px">1054</div>
<div class="a c n" style="left:1097px;top:694px;width:62px">1.225581</div>
<div class="a c n" style="left:1538px;top:22px;width:60px">3328</div>
<div class="a c t" style="left:1599px;top:22px;width:60px">ＢＥＥＮＯ</div>
<div class="a c n" style="left:1660px;top:22px;width:60px">2969</div>
<div class="a c n" style="left:1721px;top:22px;width:60px">1.229909</div>
<div class="a c n" style="left:1538px;top:43px;width:60px">4792</div>
<div class="a c t" style="left:1599px;top:43px;width:60px">山田コンサ</div>
<div class="a c n" style="left:1660px;top:43px;width:60px">1217</div>
<div class="a c n" style="left:1721px;top:43px;width:60px">1.229293</div>
<div class="a c n" style="left:1538px;top:64px;width:60px">3422</div>
<div class="a c t" style="left:1599px;top:64px;width:60px">丸順</div>
<div class="a c n" style="left:1660px;top:64px;width:60px">1075</div>
<div class="a c n" style="left:1721px;top:64px;width:60px">1.228571</div>
<div class="a c n" style="left:1538px;top:85px;width:60px">4391</div>
<div class="a c t" style="left:1599px;top:85px;width:60px">ロジザード</div>
<div class="a c n" style="left:1660px;top:85px;width:60px">2690</div>
<div class="a c n" style="left:1721px;top:85px;width:60px">1.228311</div>
<div class="a c n" style="left:1538px;top:106px;width:60px">4992</div>
<div class="a c t" style="left:1599px;top:106px;width:60px">北興化学工</div>
<div class="a c n" style="left:1660px;top:106px;width:60px">1210</div>
<div class="a c n" style="left:1721px;top:106px;width:60px">1.225937</div>
<div class="a c n" style="left:1538px;top:127px;width:60px">4351</div>
<div class="a c t" style="left:1599px;top:127px;width:60px">山田債権回</div>
<div class="a c n" style="left:1660px;top:127px;width:60px">662</div>
<div class="a c n" style="left:1721px;top:127px;width:60px">1.225926</div>
<div class="a c n" style="left:1538px;top:148px;width:60px">2780</div>
<div class="a c t" style="left:1599px;top:148px;width:60px">コメ兵</div>
<div class="a c n" style="left:1660px;top:148px;width:60px">1072</div>
<div class="a c n" style="left:1721px;top:148px;width:60px">1.225143</div>
<div class="a c n" style="left:1538px;top:169px;width:60px">9976</div>
<div class="a c t" style="left:1599px;top:169px;width:60px">セキチュー</div>
<div class="a c n" style="left:1660px;top:169px;width:60px">2150</div>
<div class="a c n" style="left:1721px;top:169px;width:60px">1.224374</div>
<div class="a c n" style="left:1538px;top:190px;width:60px">3671</div>
<div class="a c t" style="left:1599px;top:190px;width:60px">ソフトマッ</div>
<div class="a c n" style="left:1660px;top:190px;width:60px">1272</div>
<div class="a c n" style="left:1721px;top:190px;width:60px">1.224254</div>
<div class="a c n" style="left:1538px;top:211px;width:60px">7707</div>
<div class="a c t" style="left:1599px;top:211px;width:60px">プレシジョ</div>
<div class="a c n" style="left:1660px;top:211px;width:60px">1006</div>
<div class="a c n" style="left:1721px;top:211px;width:60px">1.223844</div>
<div class="a c n" style="left:1538px;top:232px;width:60px">6564</div>
<div class="a c t" style="left:1599px;top:232px;width:60px">ミダック</div>
<div class="a c n" style="left:1660px;top:232px;width:60px">4860</div>
<div class="a c n" style="left:1721px;top:232px;width:60px">1.221106</div>
<div class="a c n" style="left:1538px;top:253px;width:60px">9878</div>
<div class="a c t" style="left:1599px;top:253px;width:60px">セキド</div>
<div class="a c n" style="left:1660px;top:253px;width:60px">1044</div>
<div class="a c n" style="left:1721px;top:253px;width:60px">1.221053</div>
<div class="a c n" style="left:1538px;top:274px;width:60px">2150</div>
<div class="a c t" style="left:1599px;top:274px;width:60px">ケアネット</div>
<div class="a c n" style="left:1660px;top:274px;width:60px">5110</div>
<div class="a c n" style="left:1721px;top:274px;width:60px">1.221027</div>
<div class="a c n" style="left:1538px;top:295px;width:60px">4960</div>
<div class="a c t" style="left:1599px;top:295px;width:60px">ケミプロ化</div>
<div class="a c n" style="left:1660px;top:295px;width:60px">267</div>
<div class="a c n" style="left:1721px;top:295px;width:60px">1.219178</div>
<div class="a c n" style="left:1538px;top:316px;width:60px">6778</div>
<div class="a c t" style="left:1599px;top:316px;width:60px">アルチザネ</div>
<div class="a c n" style="left:1660px;top:316px;width:60px">1985</div>
<div class="a c n" style="left:1721px;top:316px;width:60px">1.217791</div>
<div class="a c n" style="left:1538px;top:337px;width:60px">6612</div>
<div class="a c t" style="left:1599px;top:337px;width:60px">バルミュー</div>
<div class="a c n" style="left:1660px;top:337px;width:60px">7050</div>
<div class="a c n" style="left:1721px;top:337px;width:60px">1.217617</div>
<div class="a c n" style="left:1538px;top:358px;width:60px">2156</div>
<div class="a c t" style="left:1599px;top:358px;width:60px">セーラー広</div>
<div class="a c n" style="left:1660px;top:358px;width:60px">325</div>
<div class="a c n" style="left:1721px;top:358px;width:60px">1.217228</div>
<div class="a c n" style="left:1538px;top:379px;width:60px">9972</div>
<div class="a c t" style="left:1599px;top:379px;width:60px">アルテック</div>
<div class="a c n" style="left:1660px;top:379px;width:60px">348</div>
<div class="a c n" style="left:1721px;top:379px;width:60px">1.216783</div>
<div class="a c n" style="left:1538px;top:400px;width:60px">5851</div>
<div class="a c t" style="left:1599px;top:400px;width:60px">リョービ</div>
<div class="a c n" style="left:1660px;top:400px;width:60px">1639</div>
<div class="a c n" style="left:1721px;top:400px;width:60px">1.216778</div>
<div class="a c n" style="left:1538px;top:421px;width:60px">7067</div>
<div class="a c t" style="left:1599px;top:421px;width:60px">ブランディ</div>
<div class="a c n" style="left:1660px;top:421px;width:60px">1332</div>
<div class="a c n" style="left:1721px;top:421px;width:60px">1.216438</div>
<div class="a c n" style="left:1538px;top:442px;width:60px">2678</div>
<div class="a c t" style="left:1599px;top:442px;width:60px">アスクル</div>
<div class="a c n" style="left:1660px;top:442px;width:60px">4140</div>
<div class="a c n" style="left:1721px;top:442px;width:60px">1.215859</div>
<div class="a c n" style="left:1538px;top:463px;width:60px">2791</div>
<div class="a c t" style="left:1599px;top:463px;width:60px">大黒天物産</div>
<div class="a c n" style="left:1660px;top:463px;width:60px">7210</div>
<div class="a c n" style="left:1721px;top:463px;width:60px">1.215852</div>
<div class="a c n" style="left:1538px;top:484px;width:60px">4293</div>
<div class="a c t" style="left:1599px;top:484px;width:60px">セプテーニ</div>
<div class="a c n" style="left:1660px;top:484px;width:60px">496</div>
<div class="a c n" style="left:1721px;top:484px;width:60px">1.215686</div>
<div class="a c n" style="left:1538px;top:505px;width:60px">6409</div>
<div class="a c t" style="left:1599px;top:505px;width:60px">キトー</div>
<div class="a c n" style="left:1660px;top:505px;width:60px">1780</div>
<div class="a c n" style="left:1721px;top:505px;width:60px">1.215017</div>
<div class="a c n" style="left:1538px;top:526px;width:60px">3665</div>
<div class="a c t" style="left:1599px;top:526px;width:60px">エニグモ</div>
<div class="a c n" style="left:1660px;top:526px;width:60px">1402</div>
<div class="a c n" style="left:1721px;top:526px;width:60px">1.213853</div>
<div class="a c n" style="left:1538px;top:547px;width:60px">4669</div>
<div class="a c t" style="left:1599px;top:547px;width:60px">ニッパンレ</div>
<div class="a c n" style="left:1660px;top:547px;width:60px">1058</div>
<div class="a c n" style="left:1721px;top:547px;width:60px">1.213303</div>
<div class="a c n" style="left:1538px;top:568px;width:60px">7172</div>
<div class="a c t" style="left:1599px;top:568px;width:60px">ジャパンイ</div>
<div class="a c n" style="left:1660px;top:568px;width:60px">1627</div>
<div class="a c n" style="left:1721px;top:568px;width:60px">1.21237</div>
<div class="a c n" style="left:1538px;top:589px;width:60px">6193</div>
<div class="a c t" style="left:1599px;top:589px;width:60px">バーチャレ</div>
<div class="a c n" style="left:1660px;top:589px;width:60px">796</div>
<div class="a c n" style="left:1721px;top:589px;width:60px">1.211568</div>
<div class="a c n" style="left:1538px;top:610px;width:60px">6590</div>
<div class="a c t" style="left:1599px;top:610px;width:60px">芝浦メカト</div>
<div class="a c n" style="left:1660px;top:610px;width:60px">5850</div>
<div class="a c n" style="left:1721px;top:610px;width:60px">1.21118</div>
<div class="a c n" style="left:1538px;top:631px;width:60px">4437</div>
<div class="a c t" style="left:1599px;top:631px;width:60px">ｇｏｏｄｄ</div>
<div class="a c n" style="left:1660px;top:631px;width:60px">1120</div>
<div class="a c n" style="left:1721px;top:631px;width:60px">1.210811</div>
<div class="a c n" style="left:1538px;top:652px;width:60px">2976</div>
<div class="a c t" style="left:1599px;top:652px;width:60px">日本グラン</div>
<div class="a c n" style="left:1660px;top:652px;width:60px">920</div>
<div class="a c n" style="left:1721px;top:652px;width:60px">1.210526</div>
<div class="a c n" style="left:1538px;top:673px;width:60px">6330</div>
<div class="a c t" style="left:1599px;top:673px;width:60px">東洋エンジ</div>
<div class="a c n" style="left:1660px;top:673px;width:60px">777</div>
<div class="a c n" style="left:1721px;top:673px;width:60px">1.21028</div>
<div class="a c n" style="left:1538px;top:694px;width:60px">7317</div>
<div class="a c t" style="left:1599px;top:694px;width:60px">松屋アール</div>
<div class="a c n" style="left:1660px;top:694px;width:60px">5850</div>
<div class="a c n" style="left:1721px;top:694px;width:60px">1.209928</div>
<div class="a" style="left:1898px;top:21px;width:19px;height:697px;background:#dadada"></div>
<div class="a box" style="left:1898px;top:2px;width:19px;height:19px;background:#fff;border-color:#c6c6c6"></div>
<div class="a box" style="left:1898px;top:699px;width:19px;height:19px;background:#fff;border-color:#c6c6c6"></div>
<div class="a box" style="left:1898px;top:204px;width:19px;height:53px;background:#fff;border-color:#ababab"></div>
<svg class="a" style="left:1898px;top:2px" width="20" height="716"><polygon points="5,11.5 14,11.5 9.5,6.5" fill="#777"/><polygon points="5,706 14,706 9.5,711" fill="#777"/></svg>
<svg style="left:0;top:0" width="1920" height="718" viewBox="0 258 1920 718"><rect x="1163.7" y="619.7" width="26.6" height="26.6" fill="#fff" stroke="#217346" stroke-width="1.4"/><path d="M1174 625.2 H1185.2 V640.4 H1168.6 V636.8" fill="none" stroke="#6a6a6a" stroke-width="1.2"/><rect x="1174" y="624" width="12" height="2.6" fill="#6a6a6a"/><path d="M1174.6 628.1 H1180 V630.7 H1173.1 Z" fill="#d9562b"/><rect x="1173.1" y="632.3" width="9.7" height="2.5" fill="#3f7fc1"/><rect x="1173.1" y="636.3" width="7.8" height="2.5" fill="#5aa58a"/><path d="M1170.6 623.2 H1174.6 L1172.4 627.6 H1174.2 L1167 636 L1169.6 629.4 H1167.4 Z" fill="#eac47d"/></svg>
</div>
<div id="tabs" class="a"></div>
<div class="a" style="left:757px;top:975px;width:159px;height:25px;background:#fff;border-left:1px solid #ababab;border-right:1px solid #ababab"></div>
<div class="a" style="left:760px;top:978px;width:152px;height:19px;background:linear-gradient(#fff 0%,#fff 25%,#f8ceb0 100%)"></div>
<div class="a" style="left:757px;top:998px;width:159px;height:2px;background:#217346"></div>
<div class="a" style="left:906px;top:973px;width:2px;height:2px;background:#000"></div>
<div class="tb" style="left:103px;width:115px;background:#ffff00"></div>
<div class="tx" style="left:115.1px;top:976.8px;font-size:17.3px;color:#000;letter-spacing:-1.00px;transform:scaleX(0.824)">サイコロジカル</div>
<div class="tb" style="left:223px;width:52px;background:#ffff00"></div>
<div class="tx" style="left:234.0px;top:976.8px;font-size:17.3px;color:#000;letter-spacing:-0.16px">RSI</div>
<div class="tb" style="left:280px;width:138px;background:#ffff00"></div>
<div class="tx" style="left:291.6px;top:976.8px;font-size:17.3px;color:#000;letter-spacing:-1.00px;transform:scaleX(0.899)">エンベロープ指標</div>
<div class="tx" style="left:433.1px;top:976.8px;font-size:17.3px;color:#444;letter-spacing:-1.00px;transform:scaleX(0.983)">業種別張り付けば</div>
<div class="tb" style="left:576px;width:104px;background:#ed7d31"></div>
<div class="tx" style="left:584.1px;top:976.8px;font-size:17.3px;color:#000;letter-spacing:-0.21px">業種別株価</div>
<div class="tb" style="left:685px;width:70px;background:#ed7d31"></div>
<div class="tx" style="left:693.8px;top:976.8px;font-size:17.3px;color:#000;letter-spacing:-1.00px;transform:scaleX(0.992)">業種別</div>
<div class="tx" style="left:771.8px;top:976.8px;font-size:17.3px;color:#217346;letter-spacing:0.34px">20日騰落上位50</div>
<div class="tb" style="left:917px;width:175px;background:#ed7d31"></div>
<div class="tx" style="left:927.9px;top:976.8px;font-size:17.3px;color:#000;letter-spacing:-1.00px;transform:scaleX(0.965)">日別と株価による診断</div>
<div class="tb" style="left:1097px;width:42px;background:#ed7d31"></div>
<div class="tx" style="left:1107.1px;top:976.8px;font-size:17.3px;color:#000;letter-spacing:-0.21px;width:31px;overflow:hidden">累計</div>
<div class="a" style="left:100px;top:979px;width:1px;height:20px;background:#ababab"></div>
<div class="a" style="left:220px;top:979px;width:1px;height:20px;background:#ababab"></div>
<div class="a" style="left:277px;top:979px;width:1px;height:20px;background:#ababab"></div>
<div class="a" style="left:420px;top:979px;width:1px;height:20px;background:#ababab"></div>
<div class="a" style="left:573px;top:979px;width:1px;height:20px;background:#ababab"></div>
<div class="a" style="left:682px;top:979px;width:1px;height:20px;background:#ababab"></div>
<div class="a" style="left:1094px;top:979px;width:1px;height:20px;background:#ababab"></div>
<svg style="left:0;top:976px" width="1260" height="28"><polygon points="33.2,9.2 33.2,18.2 27.6,13.7" fill="#1e6b3f"/><polygon points="56,9.2 56,18.2 61.6,13.7" fill="#1e6b3f"/><rect x="80" y="15" width="2.4" height="2.4" fill="#1e6b3f"/><rect x="85" y="15" width="2.4" height="2.4" fill="#1e6b3f"/><rect x="90" y="15" width="2.4" height="2.4" fill="#1e6b3f"/><rect x="1147" y="15" width="2.4" height="2.4" fill="#1e6b3f"/><rect x="1152" y="15" width="2.4" height="2.4" fill="#1e6b3f"/><rect x="1157" y="15" width="2.4" height="2.4" fill="#1e6b3f"/><circle cx="1180.8" cy="13.4" r="9.2" fill="none" stroke="#777" stroke-width="1.2"/><path d="M1175.6 13.4 H1186 M1180.8 8.2 V18.6" stroke="#777" stroke-width="1.4"/><rect x="1207" y="6" width="2.6" height="2.6" fill="#aaa"/><rect x="1207" y="11.6" width="2.6" height="2.6" fill="#aaa"/><rect x="1207" y="17.2" width="2.6" height="2.6" fill="#aaa"/></svg>
<div class="a" style="left:1225px;top:980px;width:670px;height:19px;background:#dadada"></div>
<div class="a" style="left:1225px;top:980px;width:19px;height:19px;background:#fff;border:1px solid #c6c6c6"></div>
<div class="a" style="left:1876px;top:980px;width:19px;height:19px;background:#fff;border:1px solid #c6c6c6"></div>
<div class="a" style="left:1431px;top:980px;width:21px;height:19px;background:#fff;border:1px solid #ababab"></div>
<svg style="left:1225px;top:980px" width="670" height="19"><polygon points="12,5 12,14 7,9.5" fill="#666"/><polygon points="658,5 658,14 663,9.5" fill="#666"/></svg>
<div id="status" class="a"></div>
<div class="tx" style="left:8.2px;top:1008.0px;font-size:15px;color:#444;letter-spacing:-0.09px">準備完了</div>
<div class="tx" style="left:1088.2px;top:1008.0px;font-size:15px;color:#444;letter-spacing:0.77px">平均: 1906.078916</div>
<div class="tx" style="left:1243.2px;top:1008.0px;font-size:15px;color:#444;letter-spacing:-0.67px">データの個数: 4</div>
<div class="tx" style="left:1378.2px;top:1008.0px;font-size:15px;color:#444;letter-spacing:0.77px">合計: 5718.236749</div>
<div class="a" style="left:1538px;top:1004px;width:50px;height:26px;background:#c6c6c6"></div>
<svg style="left:0;top:1004px" width="1920" height="26"><rect x="1555.5" y="5.5" width="15" height="14" fill="none" stroke="#555" stroke-width="1"/><path d="M1555.5 10.2 H1570.5 M1555.5 14.8 H1570.5 M1560.5 5.5 V19.5 M1565.5 5.5 V19.5" stroke="#555" stroke-width="1"/><rect x="1604.5" y="5.5" width="15" height="14" fill="none" stroke="#666" stroke-width="1"/><rect x="1607.5" y="8.5" width="9" height="8" fill="none" stroke="#666" stroke-width="1"/><path d="M1609 11.5 H1615 M1609 13.5 H1615" stroke="#666" stroke-width="1"/><path d="M1654.5 5.5 H1669.5 V19.5 H1654.5 Z M1654.5 13.5 H1665.5 V5.5 M1660.5 5.5 V13.5" fill="none" stroke="#666" stroke-width="1"/><rect x="1694" y="13" width="10" height="1.4" fill="#555"/><rect x="1712" y="13.2" width="124" height="1" fill="#999"/><rect x="1773" y="9" width="1" height="9" fill="#999"/><rect x="1751" y="6" width="5" height="15" fill="#555"/><path d="M1842.2 12.8 H1851.6 M1846.9 8.2 V17.4" stroke="#555" stroke-width="1.3"/></svg>
<div class="tx" style="left:1869.0px;top:1008.0px;font-size:15px;color:#444;letter-spacing:0.48px">70%</div>
<div id="task" class="a"></div>
<div class="a" style="left:60px;top:1030px;width:430px;height:50px;background:#fff;border:1px solid #cfcfcf;border-bottom:none"></div>
<div class="a" style="left:1048px;top:1030px;width:61px;height:50px;background:#f8efe8"></div>
<div class="tx" style="left:110.1px;top:1045.0px;font-size:18px;color:#444;letter-spacing:0.90px">検索</div>
<div class="a" style="left:929px;top:1077px;width:51px;height:3px;background:#0078d7"></div>
<div class="a" style="left:991px;top:1077px;width:51px;height:3px;background:#0078d7"></div>
<div class="a" style="left:1048px;top:1077px;width:61px;height:3px;background:#0078d7"></div>
<svg style="left:0;top:1030px" width="1920" height="50" viewBox="0 1030 1920 50"><path d="M20 1047.6 L28.6 1046.4 V1054.4 H20 Z M29.8 1046.2 L40.2 1044.8 V1054.4 H29.8 Z M20 1055.6 H28.6 V1063.6 L20 1062.4 Z M29.8 1055.6 H40.2 V1065.2 L29.8 1063.8 Z" fill="#000"/><circle cx="88" cy="1052" r="6" fill="none" stroke="#222" stroke-width="1.5"/><path d="M83.8 1056.4 L75.6 1064.6" stroke="#222" stroke-width="1.7"/><circle cx="520" cy="1055" r="8.6" fill="none" stroke="#000" stroke-width="2.4"/><path d="M570.4 1050.8 H582.4 V1059 H570.4 Z M570.4 1044.8 V1047.2 H582.4 V1044.8 M570.4 1064.4 V1062 H582.4 V1064.4 M588.6 1045 V1064" fill="none" stroke="#000" stroke-width="1.2"/><rect x="587" y="1050.6" width="3.2" height="3.2" fill="#000"/><path d="M630 1045 Q630 1043.4 631.6 1043.4 H641 L643.4 1045.6 H656 Q657 1045.6 657 1046.6 V1064.4 H630 Z" fill="#e8a91d"/><rect x="630" y="1047.2" width="27" height="18" rx="1" fill="#f8d774"/><path d="M635 1065.4 V1057.6 Q635 1056 636.6 1056 H650.4 Q652 1056 652 1057.6 V1065.4 H648 V1059.6 H639 V1065.4 Z" fill="#3a8ee0"/><path d="M699.6 1049 V1044 Q699.6 1041.2 702.4 1041.2 H709 Q711.8 1041.2 711.8 1044 V1049" fill="none" stroke="#2a2a2a" stroke-width="2"/><rect x="691" y="1048.4" width="29" height="21.6" rx="1.2" fill="#2d2d2d"/><rect x="699.8" y="1054.2" width="5.2" height="5.2" fill="#f25022"/><rect x="705.8" y="1054.2" width="5.2" height="5.2" fill="#7fba00"/><rect x="699.8" y="1060.2" width="5.2" height="5.2" fill="#00a4ef"/><rect x="705.8" y="1060.2" width="5.2" height="5.2" fill="#ffb900"/><path d="M753 1050 L768 1041 L783 1050 V1069 H753 Z" fill="#0f6cbd"/><path d="M756.4 1050.4 H779.6 V1060 H756.4 Z" fill="#fff"/><path d="M756.4 1050.4 H779.6 L768 1056.4 Z" fill="#dfe7ee"/><path d="M753 1050 L768 1058.6 L783 1050 V1069 H753 Z" fill="#28a8ea"/><path d="M753 1069 L768 1058.6 L783 1069 Z" fill="#1b93d8"/><path d="M768 1058.6 L783 1050 V1069 Z" fill="#35c1f4"/><rect x="815" y="1040" width="30" height="30" fill="#f4511e"/><circle cx="830" cy="1055" r="12.4" fill="#fff"/><circle cx="830" cy="1052.2" r="5.6" fill="#f46a3c"/><path d="M821.6 1064.6 Q822 1058.6 830 1058.6 Q838 1058.6 838.4 1064.6 Q834.6 1067.4 830 1067.4 Q825.4 1067.4 821.6 1064.6 Z" fill="#f46a3c"/><path d="M824.4 1051.6 Q825.4 1046.4 830.4 1046.4 Q835.4 1046.6 835.8 1051.4 Q831.2 1051.6 828.6 1048.8 Q827.4 1051 824.4 1051.6 Z" fill="#fff" opacity="0.55"/><rect x="878.6" y="1041.4" width="26.8" height="26.2" rx="3" fill="#2f62e6"/><path d="M878.6 1061 H905.4 V1064.6 Q905.4 1067.6 902.4 1067.6 H881.6 Q878.6 1067.6 878.6 1064.6 Z" fill="#1f3fb4"/><text x="892" y="1058.4" font-size="17" font-weight="700" text-anchor="middle" fill="#e8f0ff" font-family="Liberation Sans, sans-serif">@</text><text x="892" y="1066.4" font-size="6.5" text-anchor="middle" fill="#dfe8ff" font-family="Liberation Sans, sans-serif">menu</text><defs><linearGradient id="eg1" x1="0" y1="0" x2="1" y2="0.3"><stop offset="0" stop-color="#35b8f2"/><stop offset="0.55" stop-color="#2fc4c8"/><stop offset="1" stop-color="#5ddf4c"/></linearGradient><linearGradient id="eg2" x1="0" y1="0" x2="0.6" y2="1"><stop offset="0" stop-color="#1e9be6"/><stop offset="1" stop-color="#0a68c2"/></linearGradient></defs><circle cx="954" cy="1055" r="15" fill="url(#eg2)"/><path d="M950.4 1053.2 Q946.6 1058 948 1063.4 Q950 1069.6 956.4 1070 Q963.4 1069 967.4 1061.8 Q962 1064 957.4 1062.6 Q951.4 1060.4 951 1055.2 Q951 1053.4 952.4 1052.2 Q951.2 1052.2 950.4 1053.2 Z" fill="#0f4f9c"/><path d="M951 1055.2 Q951 1051.4 954 1051.6 Q957.2 1052 957 1055.4 Q956.8 1057.4 956.2 1058.4 Q960 1060.8 965 1060 L970 1056 L970.4 1061 L967.4 1062 Q962 1064 957.4 1062.6 Q951.4 1060.4 951 1055.2 Z" fill="#f0e0d0"/><path d="M967.2 1062 Q968.6 1060.6 970 1058 L971 1064 Z" fill="#f0e0d0"/><path d="M939.2 1051.6 Q944 1046.4 950.6 1047.6 Q955.8 1048.8 957.2 1053.6 Q958 1056.2 956.3 1058.3 Q960 1060.6 964.6 1059.6 Q969 1057.4 969 1052.4 Q968 1040.4 954 1040 Q941.4 1040.4 939.2 1051.6 Z" fill="url(#eg1)"/><circle cx="954" cy="1055" r="15.8" fill="none" stroke="#f0e0d0" stroke-width="1.6"/><rect x="1001" y="1040" width="30" height="29.6" fill="#d3e6fb"/><rect x="1001.5" y="1040.5" width="29" height="28.6" fill="none" stroke="#e6f0fc" stroke-width="1"/><rect x="1005.6" y="1045.2" width="20.8" height="14" rx="1" fill="#3b82e6"/><rect x="1007.6" y="1047.2" width="16.8" height="10" fill="#e6f1fd"/><path d="M1003.4 1064.2 L1006 1059.6 H1026 L1028.6 1064.2 Z" fill="#3b82e6"/><rect x="1013" y="1061.4" width="6" height="1.2" fill="#cfe2fb"/><path d="M1011 1051.4 L1014.6 1055 L1021.4 1048.6" fill="none" stroke="#10a3a3" stroke-width="1.8"/><rect x="1071" y="1041.4" width="21" height="27" rx="1.4" fill="#21a366"/><rect x="1081.4" y="1041.4" width="10.6" height="9" fill="#33c481"/><rect x="1071" y="1050.4" width="10.4" height="9" fill="#107c41"/><rect x="1081.4" y="1050.4" width="10.6" height="9" fill="#21a366"/><rect x="1071" y="1059.4" width="21" height="9" fill="#185c37"/><rect x="1081.4" y="1059.4" width="10.6" height="9" fill="#107c41"/><rect x="1063" y="1047" width="15.4" height="15.4" rx="1.4" fill="#107c41"/><text x="1070.7" y="1059" font-size="11" font-weight="700" text-anchor="middle" fill="#fff" font-family="Liberation Sans, sans-serif">X</text><path d="M1561.6 1059 L1569 1051.4 L1576.4 1059" fill="none" stroke="#111" stroke-width="1.5"/><path d="M1593 1060.4 Q1589.2 1060.4 1589.2 1056.8 Q1589.4 1053.6 1592.6 1053.2 Q1593.6 1048 1598.6 1047.8 Q1602.2 1047.8 1603.8 1051 Q1608.8 1051.2 1609 1056 Q1609 1060.4 1605 1060.4 Z" fill="#8a8a8a" stroke="#222" stroke-width="1.1"/><path d="M1592.6 1053.4 Q1598 1052.4 1604.8 1060.2 H1593 Q1589.4 1060.2 1589.4 1056.8 Q1589.6 1054 1592.6 1053.4 Z" fill="#c9c9c9"/><path d="M1619.4 1047.8 L1638 1045.6 V1060.6 L1619.4 1062.4 Z" fill="none" stroke="#222" stroke-width="1.2"/><path d="M1624.6 1053 Q1626.6 1049.6 1631 1051 M1631.4 1048.8 V1051.4 H1628.8 M1632.6 1055.6 Q1630.6 1059 1626.2 1057.6 M1625.8 1059.8 V1057.2 H1628.4" fill="none" stroke="#222" stroke-width="1.1"/><circle cx="1634.6" cy="1060.8" r="4.5" fill="#ff9500"/><rect x="1654" y="1050.4" width="14" height="9.6" fill="#111"/><rect x="1668" y="1053.4" width="1.6" height="3.6" fill="#111"/><path d="M1650 1049 H1654 M1650 1049 V1053.4 H1652 V1058.4 M1651 1049 V1047.6 M1653 1049 V1047.6" fill="none" stroke="#111" stroke-width="1.1"/><path d="M1682.6 1062.4 Q1683.6 1049.6 1697.4 1048.4 M1686.4 1062.4 Q1687.4 1053.4 1697.4 1052.2 M1690.2 1062.4 Q1691 1057 1697.4 1056.2" fill="none" stroke="#222" stroke-width="1.2"/><circle cx="1695.8" cy="1061.4" r="1.5" fill="#111"/><path d="M1709.4 1052 H1712.4 L1716.6 1048.4 V1061.6 L1712.4 1058 H1709.4 Z" fill="none" stroke="#111" stroke-width="1.2"/><path d="M1719.6 1052.4 Q1721.6 1055 1719.6 1057.6 M1722.4 1050 Q1726 1055 1722.4 1060" fill="none" stroke="#111" stroke-width="1.1"/><path d="M1725.6 1047.6 Q1730.4 1055 1725.6 1062.4" fill="none" stroke="#999" stroke-width="1"/><path d="M1869 1045 H1889.4 V1058.6 H1874.4 L1869 1062.4 Z" fill="#111"/><path d="M1872.6 1048.6 H1885.8 M1872.6 1051.8 H1885.8 M1872.6 1055 H1882" stroke="#f0e1d2" stroke-width="1.3"/><circle cx="1888" cy="1064.6" r="9.6" fill="#d9d5d2" stroke="#9a9a9a" stroke-width="1"/><text x="1888" y="1069.8" font-size="14.5" text-anchor="middle" fill="#111" font-family="Liberation Sans, sans-serif">2</text><rect x="1914" y="1030" width="1" height="50" fill="#b9b2ab"/></svg>
<div class="tx" style="left:1739.4px;top:1045.8px;font-size:25px;color:#222;letter-spacing:0.00px;transform:scaleX(0.971);font-family:'Liberation Sans',sans-serif">A</div>
<div class="tx" style="left:1791.5px;top:1033.6px;font-size:15px;color:#222;letter-spacing:-1.00px;transform:scaleX(0.984)">12:17</div>
<div class="tx" style="left:1770.6px;top:1057.0px;font-size:15px;color:#222;letter-spacing:0.01px">2021/05/29</div>
</body></html>
